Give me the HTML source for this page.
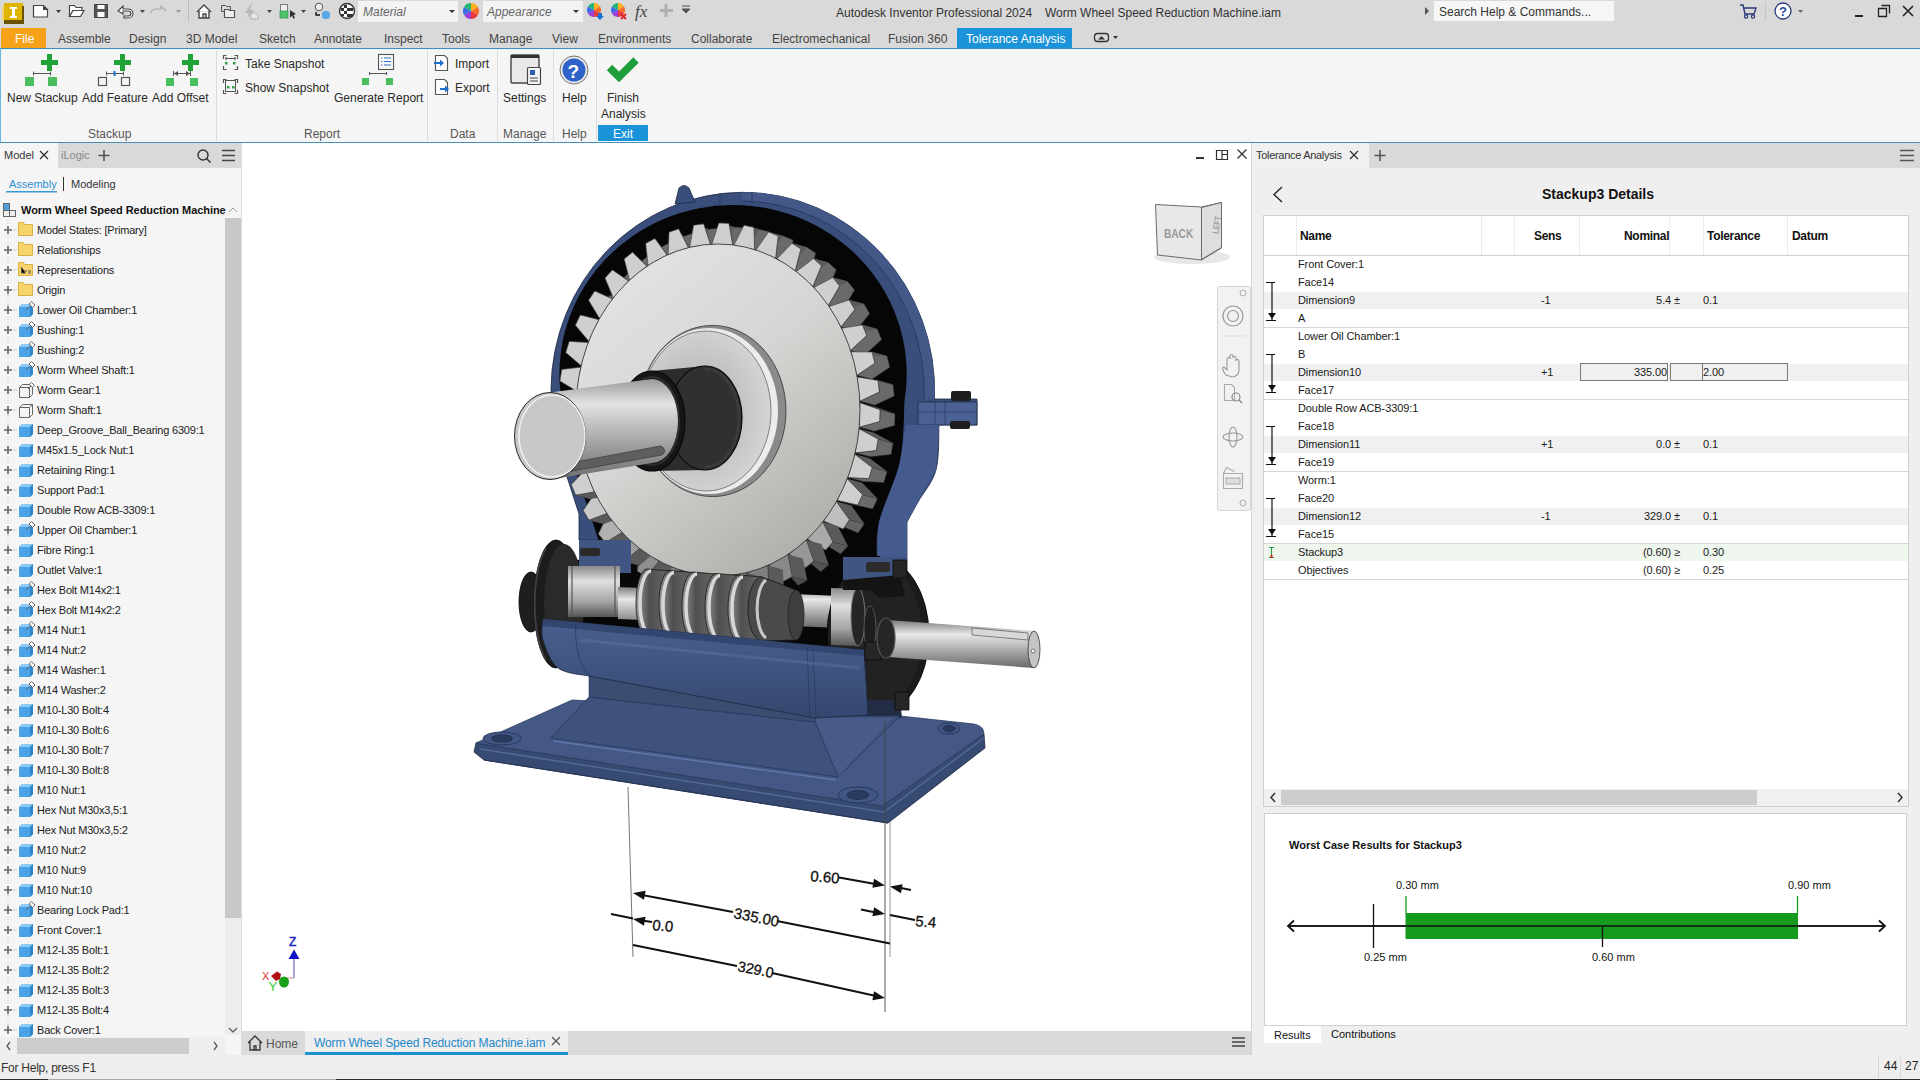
<!DOCTYPE html>
<html><head><meta charset="utf-8">
<style>
*{box-sizing:border-box;margin:0;padding:0}
html,body{width:1920px;height:1080px;overflow:hidden;background:#fff;font-family:"Liberation Sans",sans-serif;color:#222}
.a{position:absolute}
.t{position:absolute;white-space:nowrap;line-height:1}
#title{left:0;top:0;width:1920px;height:48px;background:#d9d9d9}
#ribbon{left:0;top:48px;width:1920px;height:95px;background:#f5f5f5;border-top:1px solid #4a8db3;border-bottom:1px solid #4a8db3;border-left:1px solid #6ab8e0;box-shadow:inset 0 1px 0 #dcf4fb, inset 0 -1px 0 #f0fbff}
#left{left:0;top:143px;width:242px;height:912px;background:#f5f5f5;border-right:1px solid #dedede}
#view{left:242px;top:143px;width:1010px;height:888px;background:#fff}
#doctabs{left:242px;top:1031px;width:1010px;height:24px;background:#dadada}
#right{left:1251px;top:143px;width:669px;height:912px;background:#efefef;border-left:1px solid #d4d4d4}
#status{left:0;top:1055px;width:1920px;height:25px;background:#eeeeee;border-bottom:1px solid #2e2e2e}
.tab{font-size:12px;color:#444;top:33px}
.rb{font-size:12px;color:#2a2a2a}
.grp{font-size:12px;color:#555;top:128px}
.tree{font-size:11px;color:#222;letter-spacing:-0.2px}
.th{font-size:12px;font-weight:bold;color:#111;letter-spacing:-0.3px}
.td{font-size:11px;color:#1a1a1a;letter-spacing:-0.1px}
</style></head>
<body>
<div id="title" class="a"></div>
<div id="ribbon" class="a"></div>
<div id="left" class="a"></div>
<div id="view" class="a"></div>
<div id="doctabs" class="a"></div>
<div id="right" class="a"></div>
<div id="status" class="a"></div>
<!-- TITLE BAR -->
<svg class="a" style="left:0;top:0" width="700" height="26" viewBox="0 0 700 26">
 <!-- logo -->
 <rect x="2" y="6" width="5" height="15" fill="#f0d36a"/>
 <rect x="4" y="3" width="19" height="18" fill="#e0b400"/>
 <rect x="4" y="20" width="20" height="4" fill="#6b5200"/>
 <rect x="22" y="6" width="2" height="16" fill="#6b5200"/>
 <path d="M10 7h7v2h-2v7h2v2h-7v-2h2v-7h-2z" fill="#fff"/>
 <!-- new doc -->
 <path d="M33.5 5.5h10l4 4v7.5h-14z" fill="#fff" stroke="#444" stroke-width="1.2"/>
 <path d="M43 5l5 5h-5z" fill="#444"/>
 <path d="M56 10h5l-2.5 3z" fill="#333"/>
 <!-- open -->
 <path d="M69.5 5.5h5l1.5 2h6v3h-9l-3.5 6.5z" fill="#fff" stroke="#444" stroke-width="1.2"/>
 <path d="M69.5 16.5l3.5-6h11l-3.5 6z" fill="#fff" stroke="#444" stroke-width="1.2"/>
 <!-- save -->
 <rect x="94.5" y="4.5" width="13" height="13" fill="#555" stroke="#444"/>
 <rect x="97.5" y="5" width="7" height="4" fill="#fff"/>
 <rect x="97.5" y="12" width="7" height="5" fill="#fff"/>
 <!-- undo -->
 <path d="M118 11l5-5v3h5c3 0 5 2 5 4.5s-2 4.5-5 4.5h-4v-2h4c2 0 3-1 3-2.5s-1-2.5-3-2.5h-5v3z" fill="#fff" stroke="#444" stroke-width="1.1"/>
 <path d="M140 10h5l-2.5 3z" fill="#444"/>
 <path d="M166 11l-5-5v3h-5c-3 0-5 2-5 4.5" fill="none" stroke="#aaa" stroke-width="1.1"/>
 <path d="M176 10h5l-2.5 3z" fill="#999"/>
 <rect x="188" y="0" width="1" height="22" fill="#bdbdbd"/>
 <!-- home -->
 <path d="M197 12l7-7 7 7M199 11v7h10v-7M203 18v-4h3v4" fill="#fff" stroke="#444" stroke-width="1.4"/>
 <!-- copy -->
 <path d="M221.5 5.5h4l1 1h4v5h-9z" fill="none" stroke="#555" stroke-width="1"/>
 <path d="M224.5 9.5h4l1 1h5v7h-10z" fill="#eee" stroke="#555" stroke-width="1.2"/>
 <!-- lightning (disabled) -->
 <path d="M252 3l-7 10h4l-2 6 7-9h-4z" fill="#b5b5b5"/>
 <path d="M251 13h5l2 2v4h-7z" fill="#e8e8e8" stroke="#b0b0b0"/>
 <path d="M267 10h5l-2.5 3z" fill="#444"/>
 <!-- green select -->
 <path d="M280.5 4.5h7v7h-7z" fill="#eee" stroke="#777"/>
 <rect x="280" y="11" width="8" height="7" fill="#4cc26a" stroke="#3a9a52" stroke-width="0.8"/>
 <path d="M290 10l6 4-2.5 1 1.5 3-1.5 .8-1.5-3-2 2z" fill="#333"/>
 <path d="M301 10h5l-2.5 3z" fill="#444"/>
 <!-- material ball icon -->
 <circle cx="319" cy="7" r="3.8" fill="#eee" stroke="#555"/>
 <rect x="322" y="11" width="8" height="8" rx="3" fill="#5aa8e6"/>
 <path d="M316 12v3h4" fill="none" stroke="#111" stroke-width="1.4"/>
 <!-- checker ball -->
 <circle cx="347" cy="11" r="7.5" fill="#fff" stroke="#333" stroke-width="1.4"/>
 <path d="M344 5h3v3h-3zM350 8h3v3h-3zM344 11h3v3h-3zM347 8h3v3h-3zM341 8h3v3h-3zM350 14h3v3h-3zM347 14h3v3h-3zM341 14h3v2h-3z" fill="#333"/>
 <!-- material box -->
 <rect x="358" y="1" width="100" height="21" fill="#f3f3f3"/>
 <text x="363" y="16" font-size="12" font-style="italic" fill="#666" font-family="Liberation Sans">Material</text>
 <path d="M449 10h6l-3 3z" fill="#333"/>
 <!-- color wheel -->
 <path d="M471 11L471.00 3.00A8 8 0 0 1 477.93 7.00Z" fill="#ffb01f"/><path d="M471 11L477.93 7.00A8 8 0 0 1 477.93 15.00Z" fill="#f86b26"/><path d="M471 11L477.93 15.00A8 8 0 0 1 471.00 19.00Z" fill="#e83a3a"/><path d="M471 11L471.00 19.00A8 8 0 0 1 464.07 15.00Z" fill="#9b3fd6"/><path d="M471 11L464.07 15.00A8 8 0 0 1 464.07 7.00Z" fill="#3b6ee6"/><path d="M471 11L464.07 7.00A8 8 0 0 1 471.00 3.00Z" fill="#22b573"/>
 <rect x="483" y="1" width="100" height="21" fill="#f3f3f3"/>
 <text x="487" y="16" font-size="12" font-style="italic" fill="#666" font-family="Liberation Sans">Appearance</text>
 <path d="M573 10h6l-3 3z" fill="#333"/>
 <!-- color + icons -->
 <path d="M594 10L594.00 3.00A7 7 0 0 1 600.06 6.50Z" fill="#ffb01f"/><path d="M594 10L600.06 6.50A7 7 0 0 1 600.06 13.50Z" fill="#f86b26"/><path d="M594 10L600.06 13.50A7 7 0 0 1 594.00 17.00Z" fill="#e83a3a"/><path d="M594 10L594.00 17.00A7 7 0 0 1 587.94 13.50Z" fill="#9b3fd6"/><path d="M594 10L587.94 13.50A7 7 0 0 1 587.94 6.50Z" fill="#3b6ee6"/><path d="M594 10L587.94 6.50A7 7 0 0 1 594.00 3.00Z" fill="#22b573"/><path d="M598 13h4v3h2l-4 4-4-4h2z" fill="#1e6fd0"/>
 <path d="M618 10L618.00 3.00A7 7 0 0 1 624.06 6.50Z" fill="#ffb01f"/><path d="M618 10L624.06 6.50A7 7 0 0 1 624.06 13.50Z" fill="#f86b26"/><path d="M618 10L624.06 13.50A7 7 0 0 1 618.00 17.00Z" fill="#e83a3a"/><path d="M618 10L618.00 17.00A7 7 0 0 1 611.94 13.50Z" fill="#9b3fd6"/><path d="M618 10L611.94 13.50A7 7 0 0 1 611.94 6.50Z" fill="#3b6ee6"/><path d="M618 10L611.94 6.50A7 7 0 0 1 618.00 3.00Z" fill="#22b573"/><path d="M621 14l5 5M626 14l-5 5" stroke="#e02020" stroke-width="1.8"/>
 <text x="635" y="17" font-size="17" font-style="italic" fill="#444" font-family="Liberation Serif">fx</text>
 <path d="M666 4v13M660 10.5h13" stroke="#b0b0b0" stroke-width="3"/>
 <path d="M682 6h8M682 9h8l-4 4z" fill="#555" stroke="#555" stroke-width="1"/>
</svg>
<div class="t" style="left:836px;top:7px;font-size:12px;color:#333">Autodesk Inventor Professional 2024</div>
<div class="t" style="left:1045px;top:7px;font-size:12px;color:#333">Worm Wheel Speed Reduction Machine.iam</div>
<svg class="a" style="left:1420px;top:0" width="500" height="26" viewBox="1420 0 500 26">
 <path d="M1425 7l4 4-4 4z" fill="#555"/>
 <rect x="1434" y="1" width="180" height="20" fill="#f6f6f6"/>
 <text x="1439" y="16" font-size="12" fill="#333" font-family="Liberation Sans">Search Help &amp; Commands...</text>
 <!-- cart -->
 <path d="M1740 5h3l2 9h9l2-6h-12" fill="none" stroke="#2a3a7a" stroke-width="1.4"/>
 <circle cx="1746" cy="16.5" r="1.6" fill="none" stroke="#2a3a7a" stroke-width="1.2"/>
 <circle cx="1753" cy="16.5" r="1.6" fill="none" stroke="#2a3a7a" stroke-width="1.2"/>
 <rect x="1765" y="2" width="1" height="18" fill="#c4c4c4"/>
 <circle cx="1783" cy="11" r="8" fill="#fff" stroke="#2a3a7a" stroke-width="1.3"/>
 <text x="1779" y="16" font-size="13" font-weight="bold" fill="#2a4aa0" font-family="Liberation Sans">?</text>
 <path d="M1798 10h5l-2.5 3z" fill="#666"/>
 <rect x="1855" y="15" width="8" height="2" fill="#222"/>
 <path d="M1878.5 8.5h8v8h-8zM1881.5 5.5h8v8" fill="none" stroke="#222" stroke-width="1.3"/>
 <path d="M1903 6l10 10M1913 6l-10 10" stroke="#222" stroke-width="1.6"/>
</svg>
<!-- RIBBON TABS -->
<div class="a" style="left:1px;top:28px;width:45px;height:20px;background:#f5a219"></div>
<div class="t tab" style="left:15px;color:#fff">File</div>
<div class="t tab" style="left:58px">Assemble</div>
<div class="t tab" style="left:129px">Design</div>
<div class="t tab" style="left:186px">3D Model</div>
<div class="t tab" style="left:259px">Sketch</div>
<div class="t tab" style="left:314px">Annotate</div>
<div class="t tab" style="left:384px">Inspect</div>
<div class="t tab" style="left:442px">Tools</div>
<div class="t tab" style="left:489px">Manage</div>
<div class="t tab" style="left:552px">View</div>
<div class="t tab" style="left:598px">Environments</div>
<div class="t tab" style="left:691px">Collaborate</div>
<div class="t tab" style="left:772px">Electromechanical</div>
<div class="t tab" style="left:888px">Fusion 360</div>
<div class="a" style="left:957px;top:28px;width:115px;height:20px;background:#1a93d8"></div>
<div class="t tab" style="left:966px;color:#fff">Tolerance Analysis</div>
<svg class="a" style="left:1090px;top:30px" width="32" height="16"><rect x="4.5" y="3.5" width="14" height="8" rx="3" fill="none" stroke="#333" stroke-width="1.3"/><path d="M8 9.5l3.5-3.5 3.5 3.5z" fill="#333"/><path d="M23 6h5l-2.5 3z" fill="#333"/></svg>
<!-- RIBBON CONTENT -->
<svg class="a" style="left:0;top:48px" width="700" height="95" viewBox="0 48 700 95">
 <!-- New stackup -->
 <path d="M47 54h5v6h6v5h-6v6h-5v-6h-6v-5h6z" fill="#22a33a"/>
 <path d="M33.5 73.5h17M33.5 71.5v4M50.5 71.5v4" stroke="#555" stroke-width="1"/>
 <rect x="25" y="77" width="9" height="9" fill="#4cbd5f"/>
 <rect x="48" y="77" width="9" height="9" fill="#4cbd5f"/>
 <!-- Add feature -->
 <path d="M120 54h5v6h6v5h-6v6h-5v-6h-6v-5h6z" fill="#22a33a"/>
 <path d="M106.5 73.5h17M106.5 71.5v4M123.5 71.5v4" stroke="#555" stroke-width="1"/>
 <rect x="113.5" y="71" width="2" height="5" fill="#1e6fd0"/>
 <rect x="98.5" y="77.5" width="8" height="8" fill="none" stroke="#555" stroke-width="1.2"/>
 <rect x="121.5" y="77.5" width="8" height="8" fill="none" stroke="#555" stroke-width="1.2"/>
 <!-- Add offset -->
 <path d="M188 54h5v6h6v5h-6v6h-5v-6h-6v-5h6z" fill="#22a33a"/>
 <path d="M173.5 73.5h17M173.5 71v5M190.5 71v5" stroke="#555" stroke-width="1"/>
 <path d="M174 73.5l4-2.5v5zM190 73.5l-4-2.5v5z" fill="#555"/>
 <rect x="166" y="78" width="8" height="8" fill="#4cbd5f"/>
 <rect x="190" y="78" width="8" height="8" fill="#4cbd5f"/>
 <rect x="216" y="50" width="1" height="91" fill="#dcdcdc"/>
 <!-- Take snapshot -->
 <path d="M223.5 59v-3.5h3M237.5 59v-3.5h-3M223.5 66v3.5h3M237.5 66v3.5h-3M226 58.5h9M226 57v3M235 57v3" fill="none" stroke="#555" stroke-width="1.2"/>
 <rect x="225" y="62" width="2.5" height="2.5" fill="#2aa34a"/><rect x="233" y="62" width="2.5" height="2.5" fill="#2aa34a"/>
 <!-- Show snapshot -->
 <path d="M223.5 83v-3.5h3M237.5 83v-3.5h-3M223.5 90v3.5h3M237.5 90v3.5h-3" fill="none" stroke="#555" stroke-width="1.2"/>
 <rect x="225.5" y="80.5" width="10" height="11" fill="none" stroke="#555" stroke-width="1"/>
 <rect x="227" y="86" width="2.5" height="2.5" fill="#2aa34a"/><rect x="232" y="86" width="2.5" height="2.5" fill="#2aa34a"/>
 <!-- generate report -->
 <rect x="378.5" y="54.5" width="15" height="15" fill="#fafafa" stroke="#555" stroke-width="1.1"/>
 <path d="M381 58h1.5M384 58h7M381 61.5h1.5M384 61.5h7M381 65h1.5M384 65h7" stroke="#2f6fc6" stroke-width="1.1"/>
 <path d="M369.5 73.5h17M369.5 72v3M386.5 72v3" stroke="#555" stroke-width="1"/>
 <rect x="362" y="78" width="7" height="7" fill="#4cbd5f"/>
 <rect x="386" y="78" width="7" height="7" fill="#4cbd5f"/>
 <rect x="427" y="50" width="1" height="91" fill="#dcdcdc"/>
 <!-- import -->
 <path d="M435.5 55.5h9l3 3v12h-12z" fill="#fff" stroke="#555" stroke-width="1.1"/>
 <path d="M434 62h6v-2.5l4 3.5-4 3.5v-2.5h-6z" fill="#1e6fd0"/>
 <path d="M435.5 79.5h9l3 3v12h-12z" fill="#fff" stroke="#555" stroke-width="1.1"/>
 <path d="M440 88h5v-2.5l4 3.5-4 3.5v-2.5h-5z" fill="#1e6fd0"/>
 <rect x="497" y="50" width="1" height="91" fill="#dcdcdc"/>
 <!-- settings -->
 <rect x="511" y="55" width="28" height="28" rx="1" fill="#e9e9e9" stroke="#444" stroke-width="1.4"/>
 <rect x="511" y="55" width="28" height="3" fill="#333"/>
 <rect x="527.5" y="67.5" width="13" height="17" rx="1" fill="#f5f5f5" stroke="#444" stroke-width="1.2"/>
 <rect x="530" y="70" width="5" height="5" fill="#2a5fae"/>
 <path d="M530 78h8M530 81h8" stroke="#444" stroke-width="1"/>
 <rect x="553" y="50" width="1" height="91" fill="#dcdcdc"/>
 <!-- help -->
 <circle cx="574" cy="70" r="14" fill="#e8e8e8" stroke="#777" stroke-width="1"/>
 <circle cx="574" cy="70" r="11.5" fill="#2f62c8"/>
 <text x="567.5" y="78" font-size="19" font-weight="bold" fill="#fff" font-family="Liberation Sans">?</text>
 <rect x="596" y="50" width="1" height="91" fill="#dcdcdc"/>
 <!-- finish -->
 <path d="M609.5 67.5 L619 77 L636 60" fill="none" stroke="#1e9e3a" stroke-width="7.5" stroke-linejoin="miter" stroke-miterlimit="4"/>
 <rect x="598" y="125" width="50" height="16" fill="#1a93d8"/>
</svg>
<div class="t rb" style="left:7px;top:92px">New Stackup</div>
<div class="t rb" style="left:82px;top:92px">Add Feature</div>
<div class="t rb" style="left:152px;top:92px">Add Offset</div>
<div class="t grp" style="left:88px">Stackup</div>
<div class="t rb" style="left:245px;top:58px">Take Snapshot</div>
<div class="t rb" style="left:245px;top:82px">Show Snapshot</div>
<div class="t rb" style="left:334px;top:92px">Generate Report</div>
<div class="t grp" style="left:304px">Report</div>
<div class="t rb" style="left:455px;top:58px">Import</div>
<div class="t rb" style="left:455px;top:82px">Export</div>
<div class="t grp" style="left:450px">Data</div>
<div class="t rb" style="left:503px;top:92px">Settings</div>
<div class="t grp" style="left:503px">Manage</div>
<div class="t rb" style="left:562px;top:92px">Help</div>
<div class="t grp" style="left:562px">Help</div>
<div class="t rb" style="left:607px;top:92px">Finish</div>
<div class="t rb" style="left:601px;top:108px">Analysis</div>
<div class="t grp" style="left:613px;color:#fff">Exit</div>
<!-- LEFT PANEL -->
<div class="a" style="left:0;top:143px;width:241px;height:25px;background:#d9d9d9"></div>
<div class="a" style="left:0;top:143px;width:58px;height:25px;background:#f5f5f5"></div>
<div class="t" style="left:4px;top:150px;font-size:11px;color:#333">Model</div>
<div class="t" style="left:61px;top:150px;font-size:11px;color:#888">iLogic</div>
<svg class="a" style="left:0;top:143px" width="242" height="912" viewBox="0 143 242 912">
<path d="M40 151l8 8M48 151l-8 8" stroke="#333" stroke-width="1.3"/>
<path d="M104 150v11M98.5 155.5h11" stroke="#555" stroke-width="1.6"/>
<circle cx="203" cy="155" r="5" fill="none" stroke="#333" stroke-width="1.4"/><path d="M206.5 158.5l4 4" stroke="#333" stroke-width="1.6"/>
<path d="M222 150.5h13M222 155.5h13M222 160.5h13" stroke="#444" stroke-width="1.6"/>
<rect x="6" y="191" width="51" height="1.5" fill="#3a9ad6"/>
<rect x="63" y="177" width="1" height="14" fill="#333"/>
<rect x="3.5" y="203.5" width="6" height="7" fill="#4a9fe0" stroke="#666" stroke-width="1"/><rect x="3.5" y="210.5" width="6" height="6" fill="#eee" stroke="#666" stroke-width="1"/><rect x="9.5" y="210.5" width="6" height="6" fill="#eee" stroke="#666" stroke-width="1"/>
<path d="M229 212l4-4 4 4" fill="none" stroke="#999" stroke-width="1"/>
<rect x="225" y="218" width="16" height="817" fill="#ededed"/>
<rect x="225" y="218" width="16" height="700" fill="#c8c8c8"/>
<path d="M229 1028l4 4 4-4" fill="none" stroke="#666" stroke-width="1.5"/>
<rect x="17" y="1038" width="172" height="16" fill="#cdcdcd"/>
<rect x="0" y="1037" width="225" height="18" fill="#efefef"/><rect x="17" y="1038" width="172" height="16" fill="#cdcdcd"/>
<path d="M10 1042l-3 4 3 4M214 1042l3 4-3 4" fill="none" stroke="#666" stroke-width="1.5"/>
<path d="M8 220V1035" stroke="#bbb" stroke-width="1" stroke-dasharray="1 2"/>
<rect x="3" y="225" width="11" height="10" fill="#f5f5f5"/>
<path d="M8 226v8M4 230h8" stroke="#666" stroke-width="1.6"/><path d="M13 230h4" stroke="#ccc" stroke-width="1"/>
<path d="M18.5 222.5h5l1 2h8v11h-14z" fill="#f6d36b" stroke="#d9b245" stroke-width="1"/>
<rect x="3" y="245" width="11" height="10" fill="#f5f5f5"/>
<path d="M8 246v8M4 250h8" stroke="#666" stroke-width="1.6"/><path d="M13 250h4" stroke="#ccc" stroke-width="1"/>
<path d="M18.5 242.5h5l1 2h8v11h-14z" fill="#f6d36b" stroke="#d9b245" stroke-width="1"/>
<rect x="3" y="265" width="11" height="10" fill="#f5f5f5"/>
<path d="M8 266v8M4 270h8" stroke="#666" stroke-width="1.6"/><path d="M13 270h4" stroke="#ccc" stroke-width="1"/>
<path d="M18.5 262.5h5l1 2h8v11h-14z" fill="#f6d36b" stroke="#d9b245" stroke-width="1"/>
<path d="M21.5 267v6h4M24 271h3M28 271h3M28 273h3" stroke="#555" stroke-width="1"/>
<rect x="3" y="285" width="11" height="10" fill="#f5f5f5"/>
<path d="M8 286v8M4 290h8" stroke="#666" stroke-width="1.6"/><path d="M13 290h4" stroke="#ccc" stroke-width="1"/>
<path d="M18.5 282.5h5l1 2h8v11h-14z" fill="#f6d36b" stroke="#d9b245" stroke-width="1"/>
<rect x="3" y="305" width="11" height="10" fill="#f5f5f5"/>
<path d="M8 306v8M4 310h8" stroke="#666" stroke-width="1.6"/><path d="M13 310h4" stroke="#ccc" stroke-width="1"/>
<path d="M19 317v-10l3-3h11v10l-3 3z" fill="#4aa3e6"/><path d="M19 307l3-3h11l-3 3z" fill="#8ccaf5"/><path d="M30 307l3-3v10l-3 3z" fill="#2f86cc"/>
<path d="M26 310l4-4" stroke="#666" stroke-width="1"/><path d="M29 304l2.5-2.5 3.5 3.5-2.5 2.5z" fill="#fff" stroke="#666" stroke-width="1"/>
<rect x="3" y="325" width="11" height="10" fill="#f5f5f5"/>
<path d="M8 326v8M4 330h8" stroke="#666" stroke-width="1.6"/><path d="M13 330h4" stroke="#ccc" stroke-width="1"/>
<path d="M19 337v-10l3-3h11v10l-3 3z" fill="#4aa3e6"/><path d="M19 327l3-3h11l-3 3z" fill="#8ccaf5"/><path d="M30 327l3-3v10l-3 3z" fill="#2f86cc"/>
<path d="M26 330l4-4" stroke="#666" stroke-width="1"/><path d="M29 324l2.5-2.5 3.5 3.5-2.5 2.5z" fill="#fff" stroke="#666" stroke-width="1"/>
<rect x="3" y="345" width="11" height="10" fill="#f5f5f5"/>
<path d="M8 346v8M4 350h8" stroke="#666" stroke-width="1.6"/><path d="M13 350h4" stroke="#ccc" stroke-width="1"/>
<path d="M19 357v-10l3-3h11v10l-3 3z" fill="#4aa3e6"/><path d="M19 347l3-3h11l-3 3z" fill="#8ccaf5"/><path d="M30 347l3-3v10l-3 3z" fill="#2f86cc"/>
<path d="M26 350l4-4" stroke="#666" stroke-width="1"/><path d="M29 344l2.5-2.5 3.5 3.5-2.5 2.5z" fill="#fff" stroke="#666" stroke-width="1"/>
<rect x="3" y="365" width="11" height="10" fill="#f5f5f5"/>
<path d="M8 366v8M4 370h8" stroke="#666" stroke-width="1.6"/><path d="M13 370h4" stroke="#ccc" stroke-width="1"/>
<path d="M19 377v-10l3-3h11v10l-3 3z" fill="#4aa3e6"/><path d="M19 367l3-3h11l-3 3z" fill="#8ccaf5"/><path d="M30 367l3-3v10l-3 3z" fill="#2f86cc"/>
<path d="M26 370l4-4" stroke="#666" stroke-width="1"/><path d="M29 364l2.5-2.5 3.5 3.5-2.5 2.5z" fill="#fff" stroke="#666" stroke-width="1"/>
<rect x="3" y="385" width="11" height="10" fill="#f5f5f5"/>
<path d="M8 386v8M4 390h8" stroke="#666" stroke-width="1.6"/><path d="M13 390h4" stroke="#ccc" stroke-width="1"/>
<path d="M19.5 397.5v-10l3-3h10v10l-3 3zM19.5 387.5h10v10M29.5 387.5l3-3" fill="#f5f5f5" stroke="#666" stroke-width="1"/>
<path d="M28 389l3-3M29.5 384.5l2-2 3 3-2 2z" fill="#fff" stroke="#666" stroke-width="1"/>
<rect x="3" y="405" width="11" height="10" fill="#f5f5f5"/>
<path d="M8 406v8M4 410h8" stroke="#666" stroke-width="1.6"/><path d="M13 410h4" stroke="#ccc" stroke-width="1"/>
<path d="M19.5 417.5v-10l3-3h10v10l-3 3zM19.5 407.5h10v10M29.5 407.5l3-3" fill="#f5f5f5" stroke="#666" stroke-width="1"/>
<rect x="3" y="425" width="11" height="10" fill="#f5f5f5"/>
<path d="M8 426v8M4 430h8" stroke="#666" stroke-width="1.6"/><path d="M13 430h4" stroke="#ccc" stroke-width="1"/>
<path d="M19 437v-10l3-3h11v10l-3 3z" fill="#4aa3e6"/><path d="M19 427l3-3h11l-3 3z" fill="#8ccaf5"/><path d="M30 427l3-3v10l-3 3z" fill="#2f86cc"/>
<rect x="3" y="445" width="11" height="10" fill="#f5f5f5"/>
<path d="M8 446v8M4 450h8" stroke="#666" stroke-width="1.6"/><path d="M13 450h4" stroke="#ccc" stroke-width="1"/>
<path d="M19 457v-10l3-3h11v10l-3 3z" fill="#4aa3e6"/><path d="M19 447l3-3h11l-3 3z" fill="#8ccaf5"/><path d="M30 447l3-3v10l-3 3z" fill="#2f86cc"/>
<rect x="3" y="465" width="11" height="10" fill="#f5f5f5"/>
<path d="M8 466v8M4 470h8" stroke="#666" stroke-width="1.6"/><path d="M13 470h4" stroke="#ccc" stroke-width="1"/>
<path d="M19 477v-10l3-3h11v10l-3 3z" fill="#4aa3e6"/><path d="M19 467l3-3h11l-3 3z" fill="#8ccaf5"/><path d="M30 467l3-3v10l-3 3z" fill="#2f86cc"/>
<rect x="3" y="485" width="11" height="10" fill="#f5f5f5"/>
<path d="M8 486v8M4 490h8" stroke="#666" stroke-width="1.6"/><path d="M13 490h4" stroke="#ccc" stroke-width="1"/>
<path d="M19 497v-10l3-3h11v10l-3 3z" fill="#4aa3e6"/><path d="M19 487l3-3h11l-3 3z" fill="#8ccaf5"/><path d="M30 487l3-3v10l-3 3z" fill="#2f86cc"/>
<rect x="3" y="505" width="11" height="10" fill="#f5f5f5"/>
<path d="M8 506v8M4 510h8" stroke="#666" stroke-width="1.6"/><path d="M13 510h4" stroke="#ccc" stroke-width="1"/>
<path d="M19 517v-10l3-3h11v10l-3 3z" fill="#4aa3e6"/><path d="M19 507l3-3h11l-3 3z" fill="#8ccaf5"/><path d="M30 507l3-3v10l-3 3z" fill="#2f86cc"/>
<rect x="3" y="525" width="11" height="10" fill="#f5f5f5"/>
<path d="M8 526v8M4 530h8" stroke="#666" stroke-width="1.6"/><path d="M13 530h4" stroke="#ccc" stroke-width="1"/>
<path d="M19 537v-10l3-3h11v10l-3 3z" fill="#4aa3e6"/><path d="M19 527l3-3h11l-3 3z" fill="#8ccaf5"/><path d="M30 527l3-3v10l-3 3z" fill="#2f86cc"/>
<path d="M26 530l4-4" stroke="#666" stroke-width="1"/><path d="M29 524l2.5-2.5 3.5 3.5-2.5 2.5z" fill="#fff" stroke="#666" stroke-width="1"/>
<rect x="3" y="545" width="11" height="10" fill="#f5f5f5"/>
<path d="M8 546v8M4 550h8" stroke="#666" stroke-width="1.6"/><path d="M13 550h4" stroke="#ccc" stroke-width="1"/>
<path d="M19 557v-10l3-3h11v10l-3 3z" fill="#4aa3e6"/><path d="M19 547l3-3h11l-3 3z" fill="#8ccaf5"/><path d="M30 547l3-3v10l-3 3z" fill="#2f86cc"/>
<rect x="3" y="565" width="11" height="10" fill="#f5f5f5"/>
<path d="M8 566v8M4 570h8" stroke="#666" stroke-width="1.6"/><path d="M13 570h4" stroke="#ccc" stroke-width="1"/>
<path d="M19 577v-10l3-3h11v10l-3 3z" fill="#4aa3e6"/><path d="M19 567l3-3h11l-3 3z" fill="#8ccaf5"/><path d="M30 567l3-3v10l-3 3z" fill="#2f86cc"/>
<rect x="3" y="585" width="11" height="10" fill="#f5f5f5"/>
<path d="M8 586v8M4 590h8" stroke="#666" stroke-width="1.6"/><path d="M13 590h4" stroke="#ccc" stroke-width="1"/>
<path d="M19 597v-10l3-3h11v10l-3 3z" fill="#4aa3e6"/><path d="M19 587l3-3h11l-3 3z" fill="#8ccaf5"/><path d="M30 587l3-3v10l-3 3z" fill="#2f86cc"/>
<path d="M26 590l4-4" stroke="#666" stroke-width="1"/><path d="M29 584l2.5-2.5 3.5 3.5-2.5 2.5z" fill="#fff" stroke="#666" stroke-width="1"/>
<rect x="3" y="605" width="11" height="10" fill="#f5f5f5"/>
<path d="M8 606v8M4 610h8" stroke="#666" stroke-width="1.6"/><path d="M13 610h4" stroke="#ccc" stroke-width="1"/>
<path d="M19 617v-10l3-3h11v10l-3 3z" fill="#4aa3e6"/><path d="M19 607l3-3h11l-3 3z" fill="#8ccaf5"/><path d="M30 607l3-3v10l-3 3z" fill="#2f86cc"/>
<path d="M26 610l4-4" stroke="#666" stroke-width="1"/><path d="M29 604l2.5-2.5 3.5 3.5-2.5 2.5z" fill="#fff" stroke="#666" stroke-width="1"/>
<rect x="3" y="625" width="11" height="10" fill="#f5f5f5"/>
<path d="M8 626v8M4 630h8" stroke="#666" stroke-width="1.6"/><path d="M13 630h4" stroke="#ccc" stroke-width="1"/>
<path d="M19 637v-10l3-3h11v10l-3 3z" fill="#4aa3e6"/><path d="M19 627l3-3h11l-3 3z" fill="#8ccaf5"/><path d="M30 627l3-3v10l-3 3z" fill="#2f86cc"/>
<path d="M26 630l4-4" stroke="#666" stroke-width="1"/><path d="M29 624l2.5-2.5 3.5 3.5-2.5 2.5z" fill="#fff" stroke="#666" stroke-width="1"/>
<rect x="3" y="645" width="11" height="10" fill="#f5f5f5"/>
<path d="M8 646v8M4 650h8" stroke="#666" stroke-width="1.6"/><path d="M13 650h4" stroke="#ccc" stroke-width="1"/>
<path d="M19 657v-10l3-3h11v10l-3 3z" fill="#4aa3e6"/><path d="M19 647l3-3h11l-3 3z" fill="#8ccaf5"/><path d="M30 647l3-3v10l-3 3z" fill="#2f86cc"/>
<path d="M26 650l4-4" stroke="#666" stroke-width="1"/><path d="M29 644l2.5-2.5 3.5 3.5-2.5 2.5z" fill="#fff" stroke="#666" stroke-width="1"/>
<rect x="3" y="665" width="11" height="10" fill="#f5f5f5"/>
<path d="M8 666v8M4 670h8" stroke="#666" stroke-width="1.6"/><path d="M13 670h4" stroke="#ccc" stroke-width="1"/>
<path d="M19 677v-10l3-3h11v10l-3 3z" fill="#4aa3e6"/><path d="M19 667l3-3h11l-3 3z" fill="#8ccaf5"/><path d="M30 667l3-3v10l-3 3z" fill="#2f86cc"/>
<path d="M26 670l4-4" stroke="#666" stroke-width="1"/><path d="M29 664l2.5-2.5 3.5 3.5-2.5 2.5z" fill="#fff" stroke="#666" stroke-width="1"/>
<rect x="3" y="685" width="11" height="10" fill="#f5f5f5"/>
<path d="M8 686v8M4 690h8" stroke="#666" stroke-width="1.6"/><path d="M13 690h4" stroke="#ccc" stroke-width="1"/>
<path d="M19 697v-10l3-3h11v10l-3 3z" fill="#4aa3e6"/><path d="M19 687l3-3h11l-3 3z" fill="#8ccaf5"/><path d="M30 687l3-3v10l-3 3z" fill="#2f86cc"/>
<path d="M26 690l4-4" stroke="#666" stroke-width="1"/><path d="M29 684l2.5-2.5 3.5 3.5-2.5 2.5z" fill="#fff" stroke="#666" stroke-width="1"/>
<rect x="3" y="705" width="11" height="10" fill="#f5f5f5"/>
<path d="M8 706v8M4 710h8" stroke="#666" stroke-width="1.6"/><path d="M13 710h4" stroke="#ccc" stroke-width="1"/>
<path d="M19 717v-10l3-3h11v10l-3 3z" fill="#4aa3e6"/><path d="M19 707l3-3h11l-3 3z" fill="#8ccaf5"/><path d="M30 707l3-3v10l-3 3z" fill="#2f86cc"/>
<rect x="3" y="725" width="11" height="10" fill="#f5f5f5"/>
<path d="M8 726v8M4 730h8" stroke="#666" stroke-width="1.6"/><path d="M13 730h4" stroke="#ccc" stroke-width="1"/>
<path d="M19 737v-10l3-3h11v10l-3 3z" fill="#4aa3e6"/><path d="M19 727l3-3h11l-3 3z" fill="#8ccaf5"/><path d="M30 727l3-3v10l-3 3z" fill="#2f86cc"/>
<rect x="3" y="745" width="11" height="10" fill="#f5f5f5"/>
<path d="M8 746v8M4 750h8" stroke="#666" stroke-width="1.6"/><path d="M13 750h4" stroke="#ccc" stroke-width="1"/>
<path d="M19 757v-10l3-3h11v10l-3 3z" fill="#4aa3e6"/><path d="M19 747l3-3h11l-3 3z" fill="#8ccaf5"/><path d="M30 747l3-3v10l-3 3z" fill="#2f86cc"/>
<rect x="3" y="765" width="11" height="10" fill="#f5f5f5"/>
<path d="M8 766v8M4 770h8" stroke="#666" stroke-width="1.6"/><path d="M13 770h4" stroke="#ccc" stroke-width="1"/>
<path d="M19 777v-10l3-3h11v10l-3 3z" fill="#4aa3e6"/><path d="M19 767l3-3h11l-3 3z" fill="#8ccaf5"/><path d="M30 767l3-3v10l-3 3z" fill="#2f86cc"/>
<rect x="3" y="785" width="11" height="10" fill="#f5f5f5"/>
<path d="M8 786v8M4 790h8" stroke="#666" stroke-width="1.6"/><path d="M13 790h4" stroke="#ccc" stroke-width="1"/>
<path d="M19 797v-10l3-3h11v10l-3 3z" fill="#4aa3e6"/><path d="M19 787l3-3h11l-3 3z" fill="#8ccaf5"/><path d="M30 787l3-3v10l-3 3z" fill="#2f86cc"/>
<rect x="3" y="805" width="11" height="10" fill="#f5f5f5"/>
<path d="M8 806v8M4 810h8" stroke="#666" stroke-width="1.6"/><path d="M13 810h4" stroke="#ccc" stroke-width="1"/>
<path d="M19 817v-10l3-3h11v10l-3 3z" fill="#4aa3e6"/><path d="M19 807l3-3h11l-3 3z" fill="#8ccaf5"/><path d="M30 807l3-3v10l-3 3z" fill="#2f86cc"/>
<rect x="3" y="825" width="11" height="10" fill="#f5f5f5"/>
<path d="M8 826v8M4 830h8" stroke="#666" stroke-width="1.6"/><path d="M13 830h4" stroke="#ccc" stroke-width="1"/>
<path d="M19 837v-10l3-3h11v10l-3 3z" fill="#4aa3e6"/><path d="M19 827l3-3h11l-3 3z" fill="#8ccaf5"/><path d="M30 827l3-3v10l-3 3z" fill="#2f86cc"/>
<rect x="3" y="845" width="11" height="10" fill="#f5f5f5"/>
<path d="M8 846v8M4 850h8" stroke="#666" stroke-width="1.6"/><path d="M13 850h4" stroke="#ccc" stroke-width="1"/>
<path d="M19 857v-10l3-3h11v10l-3 3z" fill="#4aa3e6"/><path d="M19 847l3-3h11l-3 3z" fill="#8ccaf5"/><path d="M30 847l3-3v10l-3 3z" fill="#2f86cc"/>
<rect x="3" y="865" width="11" height="10" fill="#f5f5f5"/>
<path d="M8 866v8M4 870h8" stroke="#666" stroke-width="1.6"/><path d="M13 870h4" stroke="#ccc" stroke-width="1"/>
<path d="M19 877v-10l3-3h11v10l-3 3z" fill="#4aa3e6"/><path d="M19 867l3-3h11l-3 3z" fill="#8ccaf5"/><path d="M30 867l3-3v10l-3 3z" fill="#2f86cc"/>
<rect x="3" y="885" width="11" height="10" fill="#f5f5f5"/>
<path d="M8 886v8M4 890h8" stroke="#666" stroke-width="1.6"/><path d="M13 890h4" stroke="#ccc" stroke-width="1"/>
<path d="M19 897v-10l3-3h11v10l-3 3z" fill="#4aa3e6"/><path d="M19 887l3-3h11l-3 3z" fill="#8ccaf5"/><path d="M30 887l3-3v10l-3 3z" fill="#2f86cc"/>
<rect x="3" y="905" width="11" height="10" fill="#f5f5f5"/>
<path d="M8 906v8M4 910h8" stroke="#666" stroke-width="1.6"/><path d="M13 910h4" stroke="#ccc" stroke-width="1"/>
<path d="M19 917v-10l3-3h11v10l-3 3z" fill="#4aa3e6"/><path d="M19 907l3-3h11l-3 3z" fill="#8ccaf5"/><path d="M30 907l3-3v10l-3 3z" fill="#2f86cc"/>
<path d="M26 910l4-4" stroke="#666" stroke-width="1"/><path d="M29 904l2.5-2.5 3.5 3.5-2.5 2.5z" fill="#fff" stroke="#666" stroke-width="1"/>
<rect x="3" y="925" width="11" height="10" fill="#f5f5f5"/>
<path d="M8 926v8M4 930h8" stroke="#666" stroke-width="1.6"/><path d="M13 930h4" stroke="#ccc" stroke-width="1"/>
<path d="M19 937v-10l3-3h11v10l-3 3z" fill="#4aa3e6"/><path d="M19 927l3-3h11l-3 3z" fill="#8ccaf5"/><path d="M30 927l3-3v10l-3 3z" fill="#2f86cc"/>
<rect x="3" y="945" width="11" height="10" fill="#f5f5f5"/>
<path d="M8 946v8M4 950h8" stroke="#666" stroke-width="1.6"/><path d="M13 950h4" stroke="#ccc" stroke-width="1"/>
<path d="M19 957v-10l3-3h11v10l-3 3z" fill="#4aa3e6"/><path d="M19 947l3-3h11l-3 3z" fill="#8ccaf5"/><path d="M30 947l3-3v10l-3 3z" fill="#2f86cc"/>
<rect x="3" y="965" width="11" height="10" fill="#f5f5f5"/>
<path d="M8 966v8M4 970h8" stroke="#666" stroke-width="1.6"/><path d="M13 970h4" stroke="#ccc" stroke-width="1"/>
<path d="M19 977v-10l3-3h11v10l-3 3z" fill="#4aa3e6"/><path d="M19 967l3-3h11l-3 3z" fill="#8ccaf5"/><path d="M30 967l3-3v10l-3 3z" fill="#2f86cc"/>
<rect x="3" y="985" width="11" height="10" fill="#f5f5f5"/>
<path d="M8 986v8M4 990h8" stroke="#666" stroke-width="1.6"/><path d="M13 990h4" stroke="#ccc" stroke-width="1"/>
<path d="M19 997v-10l3-3h11v10l-3 3z" fill="#4aa3e6"/><path d="M19 987l3-3h11l-3 3z" fill="#8ccaf5"/><path d="M30 987l3-3v10l-3 3z" fill="#2f86cc"/>
<rect x="3" y="1005" width="11" height="10" fill="#f5f5f5"/>
<path d="M8 1006v8M4 1010h8" stroke="#666" stroke-width="1.6"/><path d="M13 1010h4" stroke="#ccc" stroke-width="1"/>
<path d="M19 1017v-10l3-3h11v10l-3 3z" fill="#4aa3e6"/><path d="M19 1007l3-3h11l-3 3z" fill="#8ccaf5"/><path d="M30 1007l3-3v10l-3 3z" fill="#2f86cc"/>
<rect x="3" y="1025" width="11" height="10" fill="#f5f5f5"/>
<path d="M8 1026v8M4 1030h8" stroke="#666" stroke-width="1.6"/><path d="M13 1030h4" stroke="#ccc" stroke-width="1"/>
<path d="M19 1037v-10l3-3h11v10l-3 3z" fill="#4aa3e6"/><path d="M19 1027l3-3h11l-3 3z" fill="#8ccaf5"/><path d="M30 1027l3-3v10l-3 3z" fill="#2f86cc"/>
</svg>
<div class="t" style="left:9px;top:179px;font-size:11px;color:#2e8ed0">Assembly</div>
<div class="t" style="left:71px;top:179px;font-size:11px;color:#333">Modeling</div>
<div class="t" style="left:21px;top:205px;font-size:11px;font-weight:bold;color:#111;letter-spacing:-0.05px">Worm Wheel Speed Reduction Machine</div>
<div class="t tree" style="left:37px;top:225px">Model States: [Primary]</div>
<div class="t tree" style="left:37px;top:245px">Relationships</div>
<div class="t tree" style="left:37px;top:265px">Representations</div>
<div class="t tree" style="left:37px;top:285px">Origin</div>
<div class="t tree" style="left:37px;top:305px">Lower Oil Chamber:1</div>
<div class="t tree" style="left:37px;top:325px">Bushing:1</div>
<div class="t tree" style="left:37px;top:345px">Bushing:2</div>
<div class="t tree" style="left:37px;top:365px">Worm Wheel Shaft:1</div>
<div class="t tree" style="left:37px;top:385px">Worm Gear:1</div>
<div class="t tree" style="left:37px;top:405px">Worm Shaft:1</div>
<div class="t tree" style="left:37px;top:425px">Deep_Groove_Ball_Bearing 6309:1</div>
<div class="t tree" style="left:37px;top:445px">M45x1.5_Lock Nut:1</div>
<div class="t tree" style="left:37px;top:465px">Retaining Ring:1</div>
<div class="t tree" style="left:37px;top:485px">Support Pad:1</div>
<div class="t tree" style="left:37px;top:505px">Double Row ACB-3309:1</div>
<div class="t tree" style="left:37px;top:525px">Upper Oil Chamber:1</div>
<div class="t tree" style="left:37px;top:545px">Fibre Ring:1</div>
<div class="t tree" style="left:37px;top:565px">Outlet Valve:1</div>
<div class="t tree" style="left:37px;top:585px">Hex Bolt M14x2:1</div>
<div class="t tree" style="left:37px;top:605px">Hex Bolt M14x2:2</div>
<div class="t tree" style="left:37px;top:625px">M14 Nut:1</div>
<div class="t tree" style="left:37px;top:645px">M14 Nut:2</div>
<div class="t tree" style="left:37px;top:665px">M14 Washer:1</div>
<div class="t tree" style="left:37px;top:685px">M14 Washer:2</div>
<div class="t tree" style="left:37px;top:705px">M10-L30 Bolt:4</div>
<div class="t tree" style="left:37px;top:725px">M10-L30 Bolt:6</div>
<div class="t tree" style="left:37px;top:745px">M10-L30 Bolt:7</div>
<div class="t tree" style="left:37px;top:765px">M10-L30 Bolt:8</div>
<div class="t tree" style="left:37px;top:785px">M10 Nut:1</div>
<div class="t tree" style="left:37px;top:805px">Hex Nut M30x3,5:1</div>
<div class="t tree" style="left:37px;top:825px">Hex Nut M30x3,5:2</div>
<div class="t tree" style="left:37px;top:845px">M10 Nut:2</div>
<div class="t tree" style="left:37px;top:865px">M10 Nut:9</div>
<div class="t tree" style="left:37px;top:885px">M10 Nut:10</div>
<div class="t tree" style="left:37px;top:905px">Bearing Lock Pad:1</div>
<div class="t tree" style="left:37px;top:925px">Front Cover:1</div>
<div class="t tree" style="left:37px;top:945px">M12-L35 Bolt:1</div>
<div class="t tree" style="left:37px;top:965px">M12-L35 Bolt:2</div>
<div class="t tree" style="left:37px;top:985px">M12-L35 Bolt:3</div>
<div class="t tree" style="left:37px;top:1005px">M12-L35 Bolt:4</div>
<div class="t tree" style="left:37px;top:1025px">Back Cover:1</div><!-- VIEWPORT CHROME -->
<svg class="a" style="left:1150px;top:143px" width="101" height="380" viewBox="1150 143 101 380">
 <rect x="1196" y="157" width="8" height="2" fill="#333"/>
 <path d="M1216.5 150.5h11v9h-11zM1222 150.5v9M1222 154.5h5.5" fill="none" stroke="#333" stroke-width="1.2"/>
 <path d="M1237.5 149.5l9 9M1246.5 149.5l-9 9" stroke="#333" stroke-width="1.3"/>
 <!-- viewcube -->
 <ellipse cx="1192" cy="257" rx="38" ry="7" fill="#e4e4e4" opacity="0.9"/>
 <path d="M1155.5 204.5l46 2.5 20-4.5v45.5l-20 12-44-5z" fill="#e8e8e8" stroke="#6a6a6a" stroke-width="1"/>
 <path d="M1201.5 207v53" stroke="#6a6a6a" stroke-width="1"/>
 <path d="M1201.5 207.5l20-5v45l-20 12z" fill="#dedede" stroke="#6a6a6a" stroke-width="1"/>
 <text x="1164" y="238" font-size="13" fill="#9a9a9a" font-weight="bold" font-family="Liberation Sans" transform="translate(1164 0) scale(0.78 1) translate(-1164 0)">BACK</text>
 <text x="1206" y="237" font-size="9" fill="#a0a0a0" font-weight="bold" font-family="Liberation Sans" transform="rotate(-80 1211 229) translate(1211 0) scale(0.8 1) translate(-1211 0)">LEFT</text>
 <!-- nav bar -->
 <rect x="1217.5" y="286.5" width="33" height="224" rx="2" fill="#f2f2f2" stroke="#d4d4d4"/>
 <circle cx="1243" cy="293" r="3" fill="none" stroke="#aaa"/>
 <circle cx="1233" cy="316" r="10" fill="none" stroke="#999" stroke-width="1.2"/>
 <circle cx="1233" cy="316" r="5.5" fill="none" stroke="#999" stroke-width="1.2"/>
 <path d="M1221 336h24" stroke="#ddd"/>
 <path d="M1226 375c-3-4-5-8-2-8l3 3v-11c0-2 3-2 3 0v-3c0-2 3-2 3 0v2c0-2 3-2 3 0v3c0-2 3-2 3 0v9c0 4-3 7-7 7z" fill="none" stroke="#999" stroke-width="1.1"/>
 <path d="M1224.5 384.5h7l3 3v13h-10z" fill="none" stroke="#aaa" stroke-width="1.1"/>
 <circle cx="1236" cy="397" r="4" fill="none" stroke="#888" stroke-width="1.2"/><path d="M1239 400l3 3" stroke="#888" stroke-width="1.6"/>
 <ellipse cx="1233" cy="437" rx="10" ry="4" fill="none" stroke="#999" stroke-width="1.1"/>
 <ellipse cx="1233" cy="437" rx="4" ry="10" fill="none" stroke="#999" stroke-width="1.1"/>
 <path d="M1223.5 473.5h19v15h-19zM1223.5 473.5l3-6 8 4" fill="none" stroke="#aaa" stroke-width="1.1"/>
 <rect x="1226" y="478" width="14" height="6" fill="#ddd" stroke="#aaa"/>
 <circle cx="1243" cy="503" r="3" fill="none" stroke="#aaa"/>
</svg>
<!-- triad -->
<svg class="a" style="left:255px;top:930px" width="60" height="65" viewBox="255 930 60 65">
 <text x="289" y="946" font-size="12" fill="#1a22c0" font-family="Liberation Sans" stroke="#1a22c0" stroke-width="0.4">Z</text>
 <path d="M294 958v20" stroke="#8080c8" stroke-width="1.4"/>
 <path d="M288.5 959l5.5-9.5 5.5 9.5z" fill="#1010c8"/>
 <path d="M283 978h11" stroke="#d0a0a0" stroke-width="1.2"/>
 <path d="M271 976l6-4.5 4 2.5-1 5-4 2z" fill="#b01010"/>
 <ellipse cx="284" cy="982" rx="5" ry="5.5" fill="#18a018"/>
 <text x="262" y="980" font-size="11" fill="#e03030" font-family="Liberation Sans">X</text>
 <text x="268.5" y="991" font-size="13" fill="#30d030" font-family="Liberation Sans">Y</text>
</svg>
<!-- DOC TABS -->
<div class="a" style="left:305px;top:1031px;width:263px;height:24px;background:#efefef"></div>
<div class="a" style="left:305px;top:1052px;width:263px;height:3px;background:#1e8fd0"></div>
<svg class="a" style="left:242px;top:1031px" width="1010" height="24" viewBox="242 1031 1010 24">
 <path d="M248 1043l7-7 7 7M250 1042v8h10v-8M254 1050v-4h2v4" fill="none" stroke="#333" stroke-width="1.3"/>
 <path d="M552 1037l8 8M560 1037l-8 8" stroke="#555" stroke-width="1.2"/>
 <path d="M1232 1038h13M1232 1042h13M1232 1046h13" stroke="#444" stroke-width="1.5"/>
</svg>
<div class="t" style="left:266px;top:1038px;font-size:12px;color:#555">Home</div>
<div class="t" style="left:314px;top:1037px;font-size:12px;color:#2488c8;letter-spacing:-0.12px">Worm Wheel Speed Reduction Machine.iam</div>
<!-- STATUS -->
<div class="a" style="left:48px;top:1079px;width:288px;height:1px;background:#a8a8a8"></div>
<div class="t" style="left:1px;top:1062px;font-size:12px;color:#333;letter-spacing:-0.25px">For Help, press F1</div>
<div class="a" style="left:1878px;top:1056px;width:1px;height:22px;background:#d8d8d8"></div>
<div class="a" style="left:1900px;top:1056px;width:1px;height:22px;background:#d8d8d8"></div>
<div class="t" style="left:1884px;top:1060px;font-size:12px;color:#222">44</div>
<div class="t" style="left:1905px;top:1060px;font-size:12px;color:#222">27</div>
<svg class="a" style="left:242px;top:143px" width="1010" height="888" viewBox="242 143 1010 888">
<defs>
<linearGradient id="gdisc" x1="0.15" y1="0" x2="0.85" y2="1"><stop offset="0" stop-color="#e3e5e2"/><stop offset="0.45" stop-color="#d5d6d3"/><stop offset="1" stop-color="#a9a9a5"/></linearGradient><radialGradient id="ghub" cx="0.45" cy="0.5" r="0.6"><stop offset="0.3" stop-color="#b9b9b7"/><stop offset="1" stop-color="#d8d9d6"/></radialGradient>
<linearGradient id="gshaft" x1="0" y1="0" x2="0" y2="1"><stop offset="0" stop-color="#9a9a9a"/><stop offset="0.25" stop-color="#e4e4e4"/><stop offset="0.5" stop-color="#b8b8b8"/><stop offset="1" stop-color="#6e6e6e"/></linearGradient>
<linearGradient id="gshaft2" x1="0" y1="0" x2="0" y2="1"><stop offset="0" stop-color="#7a7a7a"/><stop offset="0.3" stop-color="#e8e8e8"/><stop offset="0.6" stop-color="#b0b0b0"/><stop offset="1" stop-color="#6a6a6a"/></linearGradient>
<linearGradient id="gblue" x1="0" y1="0" x2="0" y2="1"><stop offset="0" stop-color="#4c6090"/><stop offset="0.5" stop-color="#3f5480"/><stop offset="1" stop-color="#35476d"/></linearGradient>
<linearGradient id="gbearing" x1="0" y1="0" x2="0" y2="1"><stop offset="0" stop-color="#8a8a8a"/><stop offset="0.3" stop-color="#e0e0e0"/><stop offset="0.7" stop-color="#a5a5a5"/><stop offset="1" stop-color="#555"/></linearGradient>
<linearGradient id="gworm" x1="0" y1="0" x2="1" y2="0"><stop offset="0" stop-color="#9a9a9a"/><stop offset="0.3" stop-color="#505050"/><stop offset="0.8" stop-color="#6a6a6a"/><stop offset="1" stop-color="#aaa"/></linearGradient>
</defs>
<path d="M551 390 A192 198.6 0 0 1 742 192.3 A192 198.6 0 0 1 934.5 399 L977 399 L977 425 L939 425  C938.5 432.5 939.5 457.2 936.0 470.0 C932.5 482.8 922.8 493.3 918.0 502.0 C913.2 510.7 908.8 518.7 907.0 522.0 L907 560 L843 566 L843 578 L630 578 L630 540 L579 540 L579 514  C577.2 508.3 572.0 492.3 568.0 480.0 C564.0 467.7 557.8 455.0 555.0 440.0 C552.2 425.0 551.7 398.3 551.0 390.0Z" fill="#3a4e7c" stroke="#1d2841" stroke-width="0.8"/>
<path d="M675 204 L679 188 Q684 183 689 188 L695 202Z" fill="#3a4e7c" stroke="#1d2841" stroke-width="0.8"/>
<path d="M742 192.3 A192 198.6 0 0 1 934.5 399 L924 399 A184 190 0 0 0 742 201Z" fill="#445887"/>
<path d="M742 201 A184 190 0 0 1 924 399" fill="none" stroke="#27345d" stroke-width="0.8"/>
<path d="M720 193v12M752 192v12" stroke="#27345d" stroke-width="0.8"/>
<path d="M918 402h59v23h-59z" fill="#4b6093" stroke="#1d2841" stroke-width="0.8"/><path d="M918 412h59M935 402v23M945 402v23" stroke="#2d3d64" stroke-width="0.8"/>
<rect x="951" y="391" width="20" height="10" rx="2" fill="#1e1e1e"/><rect x="950" y="421" width="20" height="8" rx="2" fill="#1e1e1e"/>
<path d="M907 425 L939 425 L936 470 L918 502 L907 522 L907 560 L877 560 L879 522 L900 461 L906 425Z" fill="#455b8e"/>
<path d="M877 560  C877.3 553.7 875.2 538.5 879.0 522.0 C882.8 505.5 895.7 481.3 900.0 461.0 C904.3 440.7 903.8 410.2 904.6 400.0 A173.6 169 0 0 0 733 205 A173.6 169 0 0 0 559.7 384  C560.8 391.7 563.1 414.8 566.0 430.0 C568.9 445.2 573.0 461.0 577.0 475.0 C581.0 489.0 586.2 502.3 590.0 514.0 C593.8 525.7 598.3 539.8 600.0 545.0 L630 545 L630 572 L843 572 L843 566Z" fill="#060606"/>
<path d="M566 560 L880 556 L880 652 L566 636Z" fill="#070707"/>
<path d="M880.0 409.7 L895.0 413.7 L894.7 425.5 L874.2 431.2 L859.2 427.2 L879.7 421.5Z" fill="#6a6a6a" stroke="#2a2a2a" stroke-width="0.6"/>
<path d="M859.9 402.7 L874.9 406.7 L895.0 413.7 L880.0 409.7Z" fill="#5a5a5a"/>
<path d="M859.9 402.7 L880.0 409.7 L879.7 421.5 L859.2 427.2Z" fill="#cfcfcf" stroke="#3a3a3a" stroke-width="0.6"/>
<path d="M878.1 439.0 L893.1 443.0 L891.2 454.5 L870.2 456.8 L855.2 452.8 L876.2 450.5Z" fill="#6a6a6a" stroke="#2a2a2a" stroke-width="0.6"/>
<path d="M859.1 428.8 L874.1 432.8 L893.1 443.0 L878.1 439.0Z" fill="#5a5a5a"/>
<path d="M859.1 428.8 L878.1 439.0 L876.2 450.5 L855.2 452.8Z" fill="#cfcfcf" stroke="#3a3a3a" stroke-width="0.6"/>
<path d="M872.2 467.5 L887.2 471.5 L883.8 482.6 L862.8 481.4 L847.8 477.4 L868.8 478.6Z" fill="#6a6a6a" stroke="#2a2a2a" stroke-width="0.6"/>
<path d="M854.8 454.3 L869.8 458.3 L887.2 471.5 L872.2 467.5Z" fill="#5a5a5a"/>
<path d="M854.8 454.3 L872.2 467.5 L868.8 478.6 L847.8 477.4Z" fill="#cfcfcf" stroke="#3a3a3a" stroke-width="0.6"/>
<path d="M862.6 494.7 L877.6 498.7 L872.7 509.0 L852.2 504.3 L837.2 500.3 L857.7 505.0Z" fill="#6a6a6a" stroke="#2a2a2a" stroke-width="0.6"/>
<path d="M847.2 478.8 L862.2 482.8 L877.6 498.7 L862.6 494.7Z" fill="#5a5a5a"/>
<path d="M847.2 478.8 L862.6 494.7 L857.7 505.0 L837.2 500.3Z" fill="#cfcfcf" stroke="#3a3a3a" stroke-width="0.6"/>
<path d="M849.4 519.7 L864.4 523.7 L858.2 533.0 L838.6 525.0 L823.6 521.0 L843.2 529.0Z" fill="#656565" stroke="#2a2a2a" stroke-width="0.6"/>
<path d="M836.4 501.6 L851.4 505.6 L864.4 523.7 L849.4 519.7Z" fill="#5a5a5a"/>
<path d="M836.4 501.6 L849.4 519.7 L843.2 529.0 L823.6 521.0Z" fill="#bfbfbf" stroke="#3a3a3a" stroke-width="0.6"/>
<path d="M833.0 542.0 L848.0 546.0 L840.6 554.1 L822.5 542.9 L807.5 538.9 L825.6 550.1Z" fill="#5b5b5b" stroke="#2a2a2a" stroke-width="0.6"/>
<path d="M822.7 522.1 L837.7 526.1 L848.0 546.0 L833.0 542.0Z" fill="#5a5a5a"/>
<path d="M822.7 522.1 L833.0 542.0 L825.6 550.1 L807.5 538.9Z" fill="#aaaaaa" stroke="#3a3a3a" stroke-width="0.6"/>
<path d="M813.8 561.1 L828.8 565.1 L820.5 571.7 L804.1 557.7 L789.1 553.7 L805.5 567.7Z" fill="#535353" stroke="#2a2a2a" stroke-width="0.6"/>
<path d="M806.4 539.9 L821.4 543.9 L828.8 565.1 L813.8 561.1Z" fill="#5a5a5a"/>
<path d="M806.4 539.9 L813.8 561.1 L805.5 567.7 L789.1 553.7Z" fill="#979797" stroke="#3a3a3a" stroke-width="0.6"/>
<path d="M792.3 576.5 L807.3 580.5 L798.1 585.5 L784.0 568.9 L769.0 564.9 L783.1 581.5Z" fill="#4d4d4d" stroke="#2a2a2a" stroke-width="0.6"/>
<path d="M787.9 554.5 L802.9 558.5 L807.3 580.5 L792.3 576.5Z" fill="#5a5a5a"/>
<path d="M787.9 554.5 L792.3 576.5 L783.1 581.5 L769.0 564.9Z" fill="#898989" stroke="#3a3a3a" stroke-width="0.6"/>
<path d="M769.0 587.8 L784.0 591.8 L774.3 595.1 L762.6 576.3 L747.6 572.3 L759.3 591.1Z" fill="#494949" stroke="#2a2a2a" stroke-width="0.6"/>
<path d="M767.8 565.5 L782.8 569.5 L784.0 591.8 L769.0 587.8Z" fill="#5a5a5a"/>
<path d="M767.8 565.5 L769.0 587.8 L759.3 591.1 L747.6 572.3Z" fill="#7f7f7f" stroke="#3a3a3a" stroke-width="0.6"/>
<path d="M744.4 594.7 L759.4 598.7 L749.4 600.1 L740.6 579.8 L725.6 575.8 L734.4 596.1Z" fill="#464646" stroke="#2a2a2a" stroke-width="0.6"/>
<path d="M746.3 572.7 L761.3 576.7 L759.4 598.7 L744.4 594.7Z" fill="#5a5a5a"/>
<path d="M746.3 572.7 L744.4 594.7 L734.4 596.1 L725.6 575.8Z" fill="#797979" stroke="#3a3a3a" stroke-width="0.6"/>
<path d="M719.2 597.0 L734.2 601.0 L724.1 600.6 L718.3 579.1 L703.3 575.1 L709.1 596.6Z" fill="#464646" stroke="#2a2a2a" stroke-width="0.6"/>
<path d="M724.2 575.8 L739.2 579.8 L734.2 601.0 L719.2 597.0Z" fill="#5a5a5a"/>
<path d="M724.2 575.8 L719.2 597.0 L709.1 596.6 L703.3 575.1Z" fill="#787878" stroke="#3a3a3a" stroke-width="0.6"/>
<path d="M694.0 594.7 L709.0 598.7 L699.1 596.6 L696.4 574.4 L681.4 570.4 L684.1 592.6Z" fill="#474747" stroke="#2a2a2a" stroke-width="0.6"/>
<path d="M702.0 574.9 L717.0 578.9 L709.0 598.7 L694.0 594.7Z" fill="#5a5a5a"/>
<path d="M702.0 574.9 L694.0 594.7 L684.1 592.6 L681.4 570.4Z" fill="#7b7b7b" stroke="#3a3a3a" stroke-width="0.6"/>
<path d="M669.5 587.9 L684.5 591.9 L674.9 588.0 L675.4 565.7 L660.4 561.7 L659.9 584.0Z" fill="#4a4a4a" stroke="#2a2a2a" stroke-width="0.6"/>
<path d="M680.1 570.0 L695.1 574.0 L684.5 591.9 L669.5 587.9Z" fill="#5a5a5a"/>
<path d="M680.1 570.0 L669.5 587.9 L659.9 584.0 L660.4 561.7Z" fill="#828282" stroke="#3a3a3a" stroke-width="0.6"/>
<path d="M646.1 576.7 L661.1 580.7 L652.2 575.1 L655.8 553.3 L640.8 549.3 L637.2 571.1Z" fill="#4f4f4f" stroke="#2a2a2a" stroke-width="0.6"/>
<path d="M659.1 561.1 L674.1 565.1 L661.1 580.7 L646.1 576.7Z" fill="#5a5a5a"/>
<path d="M659.1 561.1 L646.1 576.7 L637.2 571.1 L640.8 549.3Z" fill="#8e8e8e" stroke="#3a3a3a" stroke-width="0.6"/>
<path d="M624.6 561.4 L639.6 565.4 L631.6 558.3 L638.1 537.5 L623.1 533.5 L616.6 554.3Z" fill="#565656" stroke="#2a2a2a" stroke-width="0.6"/>
<path d="M639.6 548.4 L654.6 552.4 L639.6 565.4 L624.6 561.4Z" fill="#5a5a5a"/>
<path d="M639.6 548.4 L624.6 561.4 L616.6 554.3 L623.1 533.5Z" fill="#9e9e9e" stroke="#3a3a3a" stroke-width="0.6"/>
<path d="M605.3 542.4 L620.3 546.4 L613.4 537.9 L622.7 518.6 L607.7 514.6 L598.4 533.9Z" fill="#5f5f5f" stroke="#2a2a2a" stroke-width="0.6"/>
<path d="M622.1 532.4 L637.1 536.4 L620.3 546.4 L605.3 542.4Z" fill="#5a5a5a"/>
<path d="M622.1 532.4 L605.3 542.4 L598.4 533.9 L607.7 514.6Z" fill="#b1b1b1" stroke="#3a3a3a" stroke-width="0.6"/>
<path d="M588.9 520.1 L603.9 524.1 L598.2 514.4 L610.1 497.1 L595.1 493.1 L583.2 510.4Z" fill="#686868" stroke="#2a2a2a" stroke-width="0.6"/>
<path d="M606.9 513.4 L621.9 517.4 L603.9 524.1 L588.9 520.1Z" fill="#5a5a5a"/>
<path d="M606.9 513.4 L588.9 520.1 L583.2 510.4 L595.1 493.1Z" fill="#c8c8c8" stroke="#3a3a3a" stroke-width="0.6"/>
<path d="M575.7 495.1 L590.7 499.1 L586.3 488.5 L600.5 473.6 L585.5 469.6 L571.3 484.5Z" fill="#6a6a6a" stroke="#2a2a2a" stroke-width="0.6"/>
<path d="M594.4 491.8 L609.4 495.8 L590.7 499.1 L575.7 495.1Z" fill="#5a5a5a"/>
<path d="M594.4 491.8 L575.7 495.1 L571.3 484.5 L585.5 469.6Z" fill="#cfcfcf" stroke="#3a3a3a" stroke-width="0.6"/>
<path d="M566.0 468.0 L581.0 472.0 L578.1 460.8 L594.1 448.7 L579.1 444.7 L563.1 456.8Z" fill="#6a6a6a" stroke="#2a2a2a" stroke-width="0.6"/>
<path d="M585.0 468.2 L600.0 472.2 L581.0 472.0 L566.0 468.0Z" fill="#5a5a5a"/>
<path d="M585.0 468.2 L566.0 468.0 L563.1 456.8 L579.1 444.7Z" fill="#cfcfcf" stroke="#3a3a3a" stroke-width="0.6"/>
<path d="M560.0 439.5 L575.0 443.5 L573.7 431.9 L591.2 422.8 L576.2 418.8 L558.7 427.9Z" fill="#6a6a6a" stroke="#2a2a2a" stroke-width="0.6"/>
<path d="M578.9 443.1 L593.9 447.1 L575.0 443.5 L560.0 439.5Z" fill="#5a5a5a"/>
<path d="M578.9 443.1 L560.0 439.5 L558.7 427.9 L576.2 418.8Z" fill="#cfcfcf" stroke="#3a3a3a" stroke-width="0.6"/>
<path d="M558.0 410.3 L573.0 414.3 L573.3 402.5 L591.8 396.8 L576.8 392.8 L558.3 398.5Z" fill="#6a6a6a" stroke="#2a2a2a" stroke-width="0.6"/>
<path d="M576.1 417.3 L591.1 421.3 L573.0 414.3 L558.0 410.3Z" fill="#5a5a5a"/>
<path d="M576.1 417.3 L558.0 410.3 L558.3 398.5 L576.8 392.8Z" fill="#cfcfcf" stroke="#3a3a3a" stroke-width="0.6"/>
<path d="M559.9 381.0 L574.9 385.0 L576.8 373.5 L595.8 371.2 L580.8 367.2 L561.8 369.5Z" fill="#6a6a6a" stroke="#2a2a2a" stroke-width="0.6"/>
<path d="M576.9 391.2 L591.9 395.2 L574.9 385.0 L559.9 381.0Z" fill="#5a5a5a"/>
<path d="M576.9 391.2 L559.9 381.0 L561.8 369.5 L580.8 367.2Z" fill="#cfcfcf" stroke="#3a3a3a" stroke-width="0.6"/>
<path d="M565.8 352.5 L580.8 356.5 L584.2 345.4 L603.2 346.6 L588.2 342.6 L569.2 341.4Z" fill="#6a6a6a" stroke="#2a2a2a" stroke-width="0.6"/>
<path d="M581.2 365.7 L596.2 369.7 L580.8 356.5 L565.8 352.5Z" fill="#5a5a5a"/>
<path d="M581.2 365.7 L565.8 352.5 L569.2 341.4 L588.2 342.6Z" fill="#cfcfcf" stroke="#3a3a3a" stroke-width="0.6"/>
<path d="M575.4 325.3 L590.4 329.3 L595.3 319.0 L613.8 323.7 L598.8 319.7 L580.3 315.0Z" fill="#6a6a6a" stroke="#2a2a2a" stroke-width="0.6"/>
<path d="M588.8 341.2 L603.8 345.2 L590.4 329.3 L575.4 325.3Z" fill="#5a5a5a"/>
<path d="M588.8 341.2 L575.4 325.3 L580.3 315.0 L598.8 319.7Z" fill="#cfcfcf" stroke="#3a3a3a" stroke-width="0.6"/>
<path d="M588.6 300.3 L603.6 304.3 L609.8 295.0 L627.4 303.0 L612.4 299.0 L594.8 291.0Z" fill="#6a6a6a" stroke="#2a2a2a" stroke-width="0.6"/>
<path d="M599.6 318.4 L614.6 322.4 L603.6 304.3 L588.6 300.3Z" fill="#5a5a5a"/>
<path d="M599.6 318.4 L588.6 300.3 L594.8 291.0 L612.4 299.0Z" fill="#cfcfcf" stroke="#3a3a3a" stroke-width="0.6"/>
<path d="M605.0 278.0 L620.0 282.0 L627.4 273.9 L643.5 285.1 L628.5 281.1 L612.4 269.9Z" fill="#6a6a6a" stroke="#2a2a2a" stroke-width="0.6"/>
<path d="M613.3 297.9 L628.3 301.9 L620.0 282.0 L605.0 278.0Z" fill="#5a5a5a"/>
<path d="M613.3 297.9 L605.0 278.0 L612.4 269.9 L628.5 281.1Z" fill="#cfcfcf" stroke="#3a3a3a" stroke-width="0.6"/>
<path d="M624.2 258.9 L639.2 262.9 L647.5 256.3 L661.9 270.3 L646.9 266.3 L632.5 252.3Z" fill="#6a6a6a" stroke="#2a2a2a" stroke-width="0.6"/>
<path d="M629.6 280.1 L644.6 284.1 L639.2 262.9 L624.2 258.9Z" fill="#5a5a5a"/>
<path d="M629.6 280.1 L624.2 258.9 L632.5 252.3 L646.9 266.3Z" fill="#cfcfcf" stroke="#3a3a3a" stroke-width="0.6"/>
<path d="M645.7 243.5 L660.7 247.5 L669.9 242.5 L682.0 259.1 L667.0 255.1 L654.9 238.5Z" fill="#6a6a6a" stroke="#2a2a2a" stroke-width="0.6"/>
<path d="M648.1 265.5 L663.1 269.5 L660.7 247.5 L645.7 243.5Z" fill="#5a5a5a"/>
<path d="M648.1 265.5 L645.7 243.5 L654.9 238.5 L667.0 255.1Z" fill="#cfcfcf" stroke="#3a3a3a" stroke-width="0.6"/>
<path d="M669.0 232.2 L684.0 236.2 L693.7 232.9 L703.4 251.7 L688.4 247.7 L678.7 228.9Z" fill="#6a6a6a" stroke="#2a2a2a" stroke-width="0.6"/>
<path d="M668.2 254.5 L683.2 258.5 L684.0 236.2 L669.0 232.2Z" fill="#5a5a5a"/>
<path d="M668.2 254.5 L669.0 232.2 L678.7 228.9 L688.4 247.7Z" fill="#cfcfcf" stroke="#3a3a3a" stroke-width="0.6"/>
<path d="M693.6 225.3 L708.6 229.3 L718.6 227.9 L725.4 248.2 L710.4 244.2 L703.6 223.9Z" fill="#6a6a6a" stroke="#2a2a2a" stroke-width="0.6"/>
<path d="M689.7 247.3 L704.7 251.3 L708.6 229.3 L693.6 225.3Z" fill="#5a5a5a"/>
<path d="M689.7 247.3 L693.6 225.3 L703.6 223.9 L710.4 244.2Z" fill="#cfcfcf" stroke="#3a3a3a" stroke-width="0.6"/>
<path d="M718.8 223.0 L733.8 227.0 L743.9 227.4 L747.7 248.9 L732.7 244.9 L728.9 223.4Z" fill="#6a6a6a" stroke="#2a2a2a" stroke-width="0.6"/>
<path d="M711.8 244.2 L726.8 248.2 L733.8 227.0 L718.8 223.0Z" fill="#5a5a5a"/>
<path d="M711.8 244.2 L718.8 223.0 L728.9 223.4 L732.7 244.9Z" fill="#cfcfcf" stroke="#3a3a3a" stroke-width="0.6"/>
<path d="M744.0 225.3 L759.0 229.3 L768.9 231.4 L769.6 253.6 L754.6 249.6 L753.9 227.4Z" fill="#6a6a6a" stroke="#2a2a2a" stroke-width="0.6"/>
<path d="M734.0 245.1 L749.0 249.1 L759.0 229.3 L744.0 225.3Z" fill="#5a5a5a"/>
<path d="M734.0 245.1 L744.0 225.3 L753.9 227.4 L754.6 249.6Z" fill="#cfcfcf" stroke="#3a3a3a" stroke-width="0.6"/>
<path d="M768.5 232.1 L783.5 236.1 L793.1 240.0 L790.6 262.3 L775.6 258.3 L778.1 236.0Z" fill="#6a6a6a" stroke="#2a2a2a" stroke-width="0.6"/>
<path d="M755.9 250.0 L770.9 254.0 L783.5 236.1 L768.5 232.1Z" fill="#5a5a5a"/>
<path d="M755.9 250.0 L768.5 232.1 L778.1 236.0 L775.6 258.3Z" fill="#cfcfcf" stroke="#3a3a3a" stroke-width="0.6"/>
<path d="M791.9 243.3 L806.9 247.3 L815.8 252.9 L810.2 274.7 L795.2 270.7 L800.8 248.9Z" fill="#6a6a6a" stroke="#2a2a2a" stroke-width="0.6"/>
<path d="M776.9 258.9 L791.9 262.9 L806.9 247.3 L791.9 243.3Z" fill="#5a5a5a"/>
<path d="M776.9 258.9 L791.9 243.3 L800.8 248.9 L795.2 270.7Z" fill="#cfcfcf" stroke="#3a3a3a" stroke-width="0.6"/>
<path d="M813.4 258.6 L828.4 262.6 L836.4 269.7 L827.9 290.5 L812.9 286.5 L821.4 265.7Z" fill="#6a6a6a" stroke="#2a2a2a" stroke-width="0.6"/>
<path d="M796.4 271.6 L811.4 275.6 L828.4 262.6 L813.4 258.6Z" fill="#5a5a5a"/>
<path d="M796.4 271.6 L813.4 258.6 L821.4 265.7 L812.9 286.5Z" fill="#cfcfcf" stroke="#3a3a3a" stroke-width="0.6"/>
<path d="M832.7 277.6 L847.7 281.6 L854.6 290.1 L843.3 309.4 L828.3 305.4 L839.6 286.1Z" fill="#6a6a6a" stroke="#2a2a2a" stroke-width="0.6"/>
<path d="M813.9 287.6 L828.9 291.6 L847.7 281.6 L832.7 277.6Z" fill="#5a5a5a"/>
<path d="M813.9 287.6 L832.7 277.6 L839.6 286.1 L828.3 305.4Z" fill="#cfcfcf" stroke="#3a3a3a" stroke-width="0.6"/>
<path d="M849.1 299.9 L864.1 303.9 L869.8 313.6 L855.9 330.9 L840.9 326.9 L854.8 309.6Z" fill="#6a6a6a" stroke="#2a2a2a" stroke-width="0.6"/>
<path d="M829.1 306.6 L844.1 310.6 L864.1 303.9 L849.1 299.9Z" fill="#5a5a5a"/>
<path d="M829.1 306.6 L849.1 299.9 L854.8 309.6 L840.9 326.9Z" fill="#cfcfcf" stroke="#3a3a3a" stroke-width="0.6"/>
<path d="M862.3 324.9 L877.3 328.9 L881.7 339.5 L865.5 354.4 L850.5 350.4 L866.7 335.5Z" fill="#6a6a6a" stroke="#2a2a2a" stroke-width="0.6"/>
<path d="M841.6 328.2 L856.6 332.2 L877.3 328.9 L862.3 324.9Z" fill="#5a5a5a"/>
<path d="M841.6 328.2 L862.3 324.9 L866.7 335.5 L850.5 350.4Z" fill="#cfcfcf" stroke="#3a3a3a" stroke-width="0.6"/>
<path d="M872.0 352.0 L887.0 356.0 L889.9 367.2 L871.9 379.3 L856.9 375.3 L874.9 363.2Z" fill="#6a6a6a" stroke="#2a2a2a" stroke-width="0.6"/>
<path d="M851.0 351.8 L866.0 355.8 L887.0 356.0 L872.0 352.0Z" fill="#5a5a5a"/>
<path d="M851.0 351.8 L872.0 352.0 L874.9 363.2 L856.9 375.3Z" fill="#cfcfcf" stroke="#3a3a3a" stroke-width="0.6"/>
<path d="M878.0 380.5 L893.0 384.5 L894.3 396.1 L874.8 405.2 L859.8 401.2 L879.3 392.1Z" fill="#6a6a6a" stroke="#2a2a2a" stroke-width="0.6"/>
<path d="M857.1 376.9 L872.1 380.9 L893.0 384.5 L878.0 380.5Z" fill="#5a5a5a"/>
<path d="M857.1 376.9 L878.0 380.5 L879.3 392.1 L859.8 401.2Z" fill="#cfcfcf" stroke="#3a3a3a" stroke-width="0.6"/>
<ellipse cx="718" cy="410" rx="142" ry="166" fill="url(#gdisc)" stroke="#333" stroke-width="0.8"/>
<ellipse cx="712.5" cy="411" rx="73.5" ry="85.6" fill="#8a8a8a" stroke="#333" stroke-width="0.8"/>
<ellipse cx="709" cy="411" rx="69" ry="83" fill="#ececec"/>
<ellipse cx="706" cy="411" rx="65" ry="80" fill="url(#ghub)" stroke="#555" stroke-width="0.7"/>
<rect x="690" y="456" width="25" height="11" fill="#111"/>
<path d="M652 371 L705 366 A37 52 0 0 1 705 470 L652 471 A33 50 0 0 1 652 371Z" fill="#2c2c2c"/>
<ellipse cx="705" cy="418" rx="37" ry="52" fill="#303030" stroke="#0a0a0a" stroke-width="1.2"/>
<path d="M705 369 A34 49 0 0 1 705 467" fill="none" stroke="#3c3c3c" stroke-width="2.5"/>
<ellipse cx="652" cy="421" rx="33" ry="50" fill="#161616" stroke="#070707" stroke-width="1.2"/>
<ellipse cx="652" cy="421" rx="27" ry="44" fill="none" stroke="#2e2e2e" stroke-width="2"/>
<path d="M550 392.5 L652 379 A26 42 0 0 1 652 463 L550 479.5Z" fill="url(#gshaft)"/>
<path d="M556 474 L662 455 A6 5 0 0 0 660 446 L570 463Z" fill="#5e5e5e" stroke="#333" stroke-width="0.6"/>
<ellipse cx="550" cy="436" rx="35.5" ry="43.5" fill="#c8c8c8" stroke="#222" stroke-width="1"/>
<ellipse cx="552" cy="436" rx="33" ry="41" fill="none" stroke="#f0f0f0" stroke-width="1.5"/><ellipse cx="531" cy="602" rx="12" ry="30" fill="#1e1e1e" stroke="#000" stroke-width="0.8"/>
<path d="M535 602 A10 28 0 0 1 545 575" fill="none" stroke="#444" stroke-width="1.2"/>
<ellipse cx="556" cy="604" rx="22" ry="64" fill="#1c1c1c" stroke="#000" stroke-width="0.8"/>
<ellipse cx="564" cy="604" rx="20" ry="60" fill="#2a2a2a"/>
<path d="M546 548 A22 64 0 0 0 546 660" fill="none" stroke="#3e3e3e" stroke-width="2"/>
<path d="M579 540 L631 540 L631 573 L612 573 L579 566Z" fill="#405582"/>
<rect x="580" y="548" width="20" height="8" rx="2" fill="#2a2a2a"/>
<path d="M568 566 L620 566 L620 617 L568 617Z" fill="url(#gbearing)"/>
<path d="M572 566v51M615 566v51" stroke="#555" stroke-width="1.2"/>
<path d="M618 587 L840 596 L840 628 L618 619Z" fill="url(#gshaft2)"/>
<path d="M647 569.0 L670 571.0 A13 33 0 0 1 670 636.0 L647 637.0 A11 34 0 0 1 647 569.0Z" fill="url(#gworm)" stroke="#151515" stroke-width="0.8"/>
<path d="M651 571.0 A11 32 0 0 0 651 635.0" fill="none" stroke="#d8d8d8" stroke-width="3.5"/>
<path d="M670 570.5 L693 572.5 A13 33 0 0 1 693 637.5 L670 638.5 A11 34 0 0 1 670 570.5Z" fill="url(#gworm)" stroke="#151515" stroke-width="0.8"/>
<path d="M674 572.5 A11 32 0 0 0 674 636.5" fill="none" stroke="#d8d8d8" stroke-width="3.5"/>
<path d="M693 572.0 L716 574.0 A13 33 0 0 1 716 639.0 L693 640.0 A11 34 0 0 1 693 572.0Z" fill="url(#gworm)" stroke="#151515" stroke-width="0.8"/>
<path d="M697 574.0 A11 32 0 0 0 697 638.0" fill="none" stroke="#d8d8d8" stroke-width="3.5"/>
<path d="M716 573.5 L739 575.5 A13 33 0 0 1 739 640.5 L716 641.5 A11 34 0 0 1 716 573.5Z" fill="url(#gworm)" stroke="#151515" stroke-width="0.8"/>
<path d="M720 575.5 A11 32 0 0 0 720 639.5" fill="none" stroke="#d8d8d8" stroke-width="3.5"/>
<path d="M739 575.0 L762 577.0 A13 33 0 0 1 762 642.0 L739 643.0 A11 34 0 0 1 739 575.0Z" fill="url(#gworm)" stroke="#151515" stroke-width="0.8"/>
<path d="M743 577.0 A11 32 0 0 0 743 641.0" fill="none" stroke="#d8d8d8" stroke-width="3.5"/>
<path d="M762 577 L796 590 L796 640 L762 641 A14 32 0 0 1 762 577Z" fill="#4a4a4a" stroke="#151515" stroke-width="0.8"/>
<path d="M766 580 A12 30 0 0 0 766 638" fill="none" stroke="#c8c8c8" stroke-width="3"/>
<ellipse cx="796" cy="615" rx="8" ry="25" fill="#3e3e3e" stroke="#222" stroke-width="0.8"/>
<ellipse cx="878" cy="635" rx="51" ry="78" fill="#1b1b1b" stroke="#000" stroke-width="0.8"/>
<ellipse cx="876" cy="635" rx="46" ry="74" fill="#222"/>
<path d="M831 588 L857 589 L857 646 L831 645Z" fill="url(#gbearing)"/>
<ellipse cx="858" cy="617" rx="7" ry="29" fill="#252525" stroke="#777" stroke-width="1"/>
<ellipse cx="870" cy="628" rx="6" ry="22" fill="#1e1e1e" stroke="#555" stroke-width="1"/>
<path d="M843 557 L907 557 L900 580 L843 580Z" fill="#405582"/>
<rect x="866" y="562" width="24" height="10" rx="2" fill="#2c2c2c"/>
<path d="M843 580 L900 575 L905 596 L880 598 L870 590 L843 590Z" fill="#141414"/>
<path d="M893 560 h14 v18 h-14z" fill="#262626" stroke="#0a0a0a" stroke-width="0.8"/>
<path d="M476 743 L882 806 L984 734 L985 748 L888 823 L484 760 L474 752Z" fill="#374a72" stroke="#1d2841" stroke-width="0.8"/>
<path d="M476 743 L572 700 L900 716 L974 724 Q984 726 984 734 L882 806Z" fill="#445785" stroke="#2d3d64" stroke-width="0.8"/>
<path d="M480 749 L884 812 L984 738" fill="none" stroke="#657db3" stroke-width="1.5" opacity="0.6"/>
<path d="M484 760 L888 823" stroke="#27365b" stroke-width="1"/>
<ellipse cx="502" cy="738.5" rx="19" ry="6.5" fill="#425684" stroke="#27395d" stroke-width="1"/>
<ellipse cx="502" cy="738.5" rx="10.5" ry="3.6" fill="#2b3b60" stroke="#1e2a45" stroke-width="0.8"/>
<ellipse cx="858" cy="795" rx="20" ry="8" fill="#425684" stroke="#27395d" stroke-width="1"/>
<ellipse cx="858" cy="795" rx="11.0" ry="4.4" fill="#2b3b60" stroke="#1e2a45" stroke-width="0.8"/>
<ellipse cx="949" cy="728.5" rx="11" ry="5.5" fill="#425684" stroke="#27395d" stroke-width="1"/>
<ellipse cx="949" cy="728.5" rx="6.1" ry="3.0" fill="#2b3b60" stroke="#1e2a45" stroke-width="0.8"/>
<path d="M812 700 L900 700 L902 718 L812 720Z" fill="#222c44"/>
<path d="M551 738 L589 697 L815 716 L900 716 L838 777Z" fill="#3f527c" stroke="#27395d" stroke-width="0.8"/>
<path d="M815 718 L893 718 L838 777Z" fill="#485b88"/>
<path d="M589 697 L815 722 L838 777" fill="none" stroke="#27395d" stroke-width="0.8"/>
<path d="M553 741 L836 780" stroke="#738cbd" stroke-width="1.6" opacity="0.6"/>
<path d="M589 673 L589 697 L815 722 L815 700Z" fill="#3b4e72" stroke="#27395d" stroke-width="0.6"/>
<path d="M543 619 L864 650 L868 715 L815 718 L589 676  C583.8 674.7 565.7 674.0 558.0 668.0 C550.3 662.0 545.5 648.2 543.0 640.0 C540.5 631.8 543.0 622.5 543.0 619.0Z" fill="url(#gblue)" stroke="#1d2841" stroke-width="0.8"/>
<path d="M543 619 L864 650 L864 656 L543 626Z" fill="#334670"/>
<path d="M576 624 C 574 645 580 665 589 676" fill="none" stroke="#27395d" stroke-width="0.8"/>
<path d="M807 648 L810 718 M813 649 L816 719" stroke="#27395d" stroke-width="0.7"/>
<path d="M580 640 L860 668" stroke="#657db3" stroke-width="3" opacity="0.35"/>
<circle cx="940" cy="675" r="0"/>
<path d="M865 642 h16 v18 h-16z" fill="#262626" stroke="#0a0a0a" stroke-width="0.8"/>
<path d="M895 692 h14 v18 h-14z" fill="#262626" stroke="#0a0a0a" stroke-width="0.8"/>
<path d="M888 620 L1033 631 L1033 668 L888 657Z" fill="url(#gshaft2)"/>
<ellipse cx="1034" cy="649.5" rx="6" ry="18.5" fill="#c4c4c4" stroke="#333" stroke-width="0.8"/>
<circle cx="1033" cy="651" r="2" fill="#fff" stroke="#555" stroke-width="0.8"/>
<path d="M972 628 L1028 633 L1028 640 L972 635Z" fill="#d8d8d8" stroke="#555" stroke-width="0.7"/>
<ellipse cx="886" cy="638" rx="9" ry="20" fill="#262626" stroke="#555" stroke-width="1.2"/>
<path d="M628 787 L633 957" stroke="#666" stroke-width="0.9"/>
<path d="M885 720 L885 1012" stroke="#444" stroke-width="0.9"/>
<path d="M890 822 L890 957" stroke="#888" stroke-width="0.9"/>
<path d="M839 877.5 L878 884.5 M911 890 L896 887 M652 922 L642 920.5 M611 914 L633 918.5 M642 895 L733 912 M777 921 L890 943.5 M861 909.5 L878 913 M890 915 L915 920 M633 945 L737 966 M772 973 L876 996" stroke="#111" stroke-width="2.2"/>
<path d="M885 885.5 l-12 -4.5 l0 9z" fill="#111" transform="rotate(11 885 885.5)"/>
<path d="M890 886.5 l-12 -4.5 l0 9z" fill="#111" transform="rotate(191 890 886.5)"/>
<path d="M633 893 l-12 -4.5 l0 9z" fill="#111" transform="rotate(191 633 893)"/>
<path d="M633 919 l-12 -4.5 l0 9z" fill="#111" transform="rotate(191 633 919)"/>
<path d="M885 914 l-12 -4.5 l0 9z" fill="#111" transform="rotate(11 885 914)"/>
<path d="M885 998 l-12 -4.5 l0 9z" fill="#111" transform="rotate(11 885 998)"/>
<text x="810" y="881" font-size="15" fill="#111" stroke="#111" stroke-width="0.3" font-family="Liberation Sans" transform="rotate(5 810 881)">0.60</text>
<text x="733" y="918" font-size="15" fill="#111" stroke="#111" stroke-width="0.3" font-family="Liberation Sans" transform="rotate(11 733 918)">335.00</text>
<text x="652" y="930" font-size="15" fill="#111" stroke="#111" stroke-width="0.3" font-family="Liberation Sans" transform="rotate(5 652 930)">0.0</text>
<text x="915" y="926" font-size="15" fill="#111" stroke="#111" stroke-width="0.3" font-family="Liberation Sans" transform="rotate(5 915 926)">5.4</text>
<text x="737" y="971" font-size="14.5" fill="#111" stroke="#111" stroke-width="0.3" font-family="Liberation Sans" transform="rotate(11 737 971)">329.0</text>
</svg><!-- RIGHT PANEL -->
<div class="a" style="left:1252px;top:143px;width:668px;height:25px;background:#d9d9d9"></div>
<div class="a" style="left:1252px;top:143px;width:117px;height:25px;background:#f0f0f0"></div>
<div class="t" style="left:1256px;top:150px;font-size:11px;color:#333;letter-spacing:-0.3px">Tolerance Analysis</div>
<div class="t" style="left:1542px;top:187px;font-size:14px;font-weight:bold;color:#111">Stackup3 Details</div>
<div class="a" style="left:1263px;top:215px;width:646px;height:592px;background:#fff;border:1px solid #cfcfcf"></div>
<svg class="a" style="left:1252px;top:143px" width="668" height="912" viewBox="1252 143 668 912">
<path d="M1350 151l8 8M1358 151l-8 8" stroke="#333" stroke-width="1.3"/>
<path d="M1380 150v11M1374.5 155.5h11" stroke="#555" stroke-width="1.6"/>
<path d="M1900 150.5h14M1900 155.5h14M1900 160.5h14" stroke="#555" stroke-width="1.6"/>
<path d="M1282 187l-8 7.5 8 7.5" fill="none" stroke="#222" stroke-width="1.4"/>
<rect x="1296" y="216" width="1" height="39" fill="#ececec"/>
<rect x="1481" y="216" width="1" height="39" fill="#ececec"/>
<rect x="1514" y="216" width="1" height="39" fill="#ececec"/>
<rect x="1579" y="216" width="1" height="39" fill="#ececec"/>
<rect x="1669" y="216" width="1" height="39" fill="#ececec"/>
<rect x="1703" y="216" width="1" height="39" fill="#ececec"/>
<rect x="1787" y="216" width="1" height="39" fill="#ececec"/>
<rect x="1264" y="255" width="644" height="1" fill="#d0d0d0"/>
<rect x="1264" y="292" width="644" height="17" fill="#f0f0f0"/>
<rect x="1264" y="364" width="644" height="17" fill="#f0f0f0"/>
<rect x="1264" y="436" width="644" height="17" fill="#f0f0f0"/>
<rect x="1264" y="508" width="644" height="17" fill="#f0f0f0"/>
<rect x="1264" y="544" width="644" height="17" fill="#eef6ee"/>
<rect x="1264" y="327" width="644" height="1" fill="#d6d6d6"/>
<rect x="1264" y="399" width="644" height="1" fill="#d6d6d6"/>
<rect x="1264" y="471" width="644" height="1" fill="#d6d6d6"/>
<rect x="1264" y="543" width="644" height="1" fill="#d6d6d6"/>
<rect x="1264" y="579" width="644" height="1" fill="#d6d6d6"/>
<path d="M1266 282.5h9M1272 282v38M1266 320.5h10" stroke="#111" stroke-width="1.2"/><path d="M1268 313h8l-4 6z" fill="#111"/>
<path d="M1266 354.5h9M1272 354v38M1266 392.5h10" stroke="#111" stroke-width="1.2"/><path d="M1268 385h8l-4 6z" fill="#111"/>
<path d="M1266 426.5h9M1272 426v38M1266 464.5h10" stroke="#111" stroke-width="1.2"/><path d="M1268 457h8l-4 6z" fill="#111"/>
<path d="M1266 498.5h9M1272 498v38M1266 536.5h10" stroke="#111" stroke-width="1.2"/><path d="M1268 529h8l-4 6z" fill="#111"/>
<path d="M1269 547.5h5M1271.5 547v11M1269 557.5h5" stroke="#2a9a3a" stroke-width="1.1"/><rect x="1270.5" y="555" width="2" height="3" fill="#d22"/>
<rect x="1580.5" y="363.5" width="87" height="17" fill="#f0f0f0" stroke="#777" stroke-width="1"/>
<rect x="1670.5" y="363.5" width="117" height="17" fill="#f0f0f0" stroke="#777" stroke-width="1"/>
<rect x="1670.5" y="363.5" width="32" height="17" fill="#f0f0f0" stroke="#777" stroke-width="1"/>
<rect x="1264" y="789" width="644" height="17" fill="#f0f0f0"/>
<rect x="1281" y="790" width="476" height="15" fill="#cdcdcd"/>
<path d="M1275 793l-4 4.5 4 4.5M1898 793l4 4.5-4 4.5" fill="none" stroke="#333" stroke-width="1.5"/>
<rect x="1264.5" y="813.5" width="642" height="212" fill="#fff" stroke="#d0d0d0"/>
<path d="M1288 926h597" stroke="#111" stroke-width="1.3"/>
<path d="M1294 920.5l-6 5.5 6 5.5M1879 920.5l6 5.5-6 5.5" fill="none" stroke="#111" stroke-width="1.8"/>
<rect x="1405.5" y="913" width="392.5" height="26" fill="#169a1e"/>
<path d="M1288 926h597" stroke="#111" stroke-width="1.6"/>
<path d="M1373.5 904v44M1602.5 926v21" stroke="#111" stroke-width="1.3"/>
<path d="M1406 896v17M1797.5 896v17" stroke="#169a1e" stroke-width="1.3"/>
<rect x="1264" y="1026" width="57" height="17" fill="#fff"/>
</svg>
<div class="t th" style="left:1300px;top:230px">Name</div>
<div class="t th" style="left:1534px;top:230px">Sens</div>
<div class="t th" style="left:1624px;top:230px">Nominal</div>
<div class="t th" style="left:1707px;top:230px">Tolerance</div>
<div class="t th" style="left:1792px;top:230px">Datum</div>
<div class="t td" style="left:1298px;top:259px">Front Cover:1</div>
<div class="t td" style="left:1298px;top:277px">Face14</div>
<div class="t td" style="left:1298px;top:295px">Dimension9</div>
<div class="t td" style="left:1541px;top:295px">-1</div>
<div class="t td" style="left:1580px;width:100px;text-align:right;top:295px">5.4 ±</div>
<div class="t td" style="left:1703px;top:295px">0.1</div>
<div class="t td" style="left:1298px;top:313px">A</div>
<div class="t td" style="left:1298px;top:331px">Lower Oil Chamber:1</div>
<div class="t td" style="left:1298px;top:349px">B</div>
<div class="t td" style="left:1298px;top:367px">Dimension10</div>
<div class="t td" style="left:1541px;top:367px">+1</div>
<div class="t td" style="left:1580px;width:87px;text-align:right;top:367px">335.00</div>
<div class="t td" style="left:1703px;top:367px">2.00</div>
<div class="t td" style="left:1298px;top:385px">Face17</div>
<div class="t td" style="left:1298px;top:403px">Double Row ACB-3309:1</div>
<div class="t td" style="left:1298px;top:421px">Face18</div>
<div class="t td" style="left:1298px;top:439px">Dimension11</div>
<div class="t td" style="left:1541px;top:439px">+1</div>
<div class="t td" style="left:1580px;width:100px;text-align:right;top:439px">0.0 ±</div>
<div class="t td" style="left:1703px;top:439px">0.1</div>
<div class="t td" style="left:1298px;top:457px">Face19</div>
<div class="t td" style="left:1298px;top:475px">Worm:1</div>
<div class="t td" style="left:1298px;top:493px">Face20</div>
<div class="t td" style="left:1298px;top:511px">Dimension12</div>
<div class="t td" style="left:1541px;top:511px">-1</div>
<div class="t td" style="left:1580px;width:100px;text-align:right;top:511px">329.0 ±</div>
<div class="t td" style="left:1703px;top:511px">0.1</div>
<div class="t td" style="left:1298px;top:529px">Face15</div>
<div class="t td" style="left:1298px;top:547px">Stackup3</div>
<div class="t td" style="left:1580px;width:100px;text-align:right;top:547px">(0.60) ≥</div>
<div class="t td" style="left:1703px;top:547px">0.30</div>
<div class="t td" style="left:1298px;top:565px">Objectives</div>
<div class="t td" style="left:1580px;width:100px;text-align:right;top:565px">(0.60) ≥</div>
<div class="t td" style="left:1703px;top:565px">0.25</div>
<div class="t" style="left:1289px;top:840px;font-size:11px;font-weight:bold;color:#111">Worst Case Results for Stackup3</div>
<div class="t" style="left:1396px;top:880px;font-size:11px;color:#111">0.30 mm</div>
<div class="t" style="left:1788px;top:880px;font-size:11px;color:#111">0.90 mm</div>
<div class="t" style="left:1364px;top:952px;font-size:11px;color:#111">0.25 mm</div>
<div class="t" style="left:1592px;top:952px;font-size:11px;color:#111">0.60 mm</div>
<div class="t" style="left:1274px;top:1030px;font-size:11px;color:#111">Results</div>
<div class="t" style="left:1331px;top:1029px;font-size:11px;color:#111">Contributions</div>
</body></html>
